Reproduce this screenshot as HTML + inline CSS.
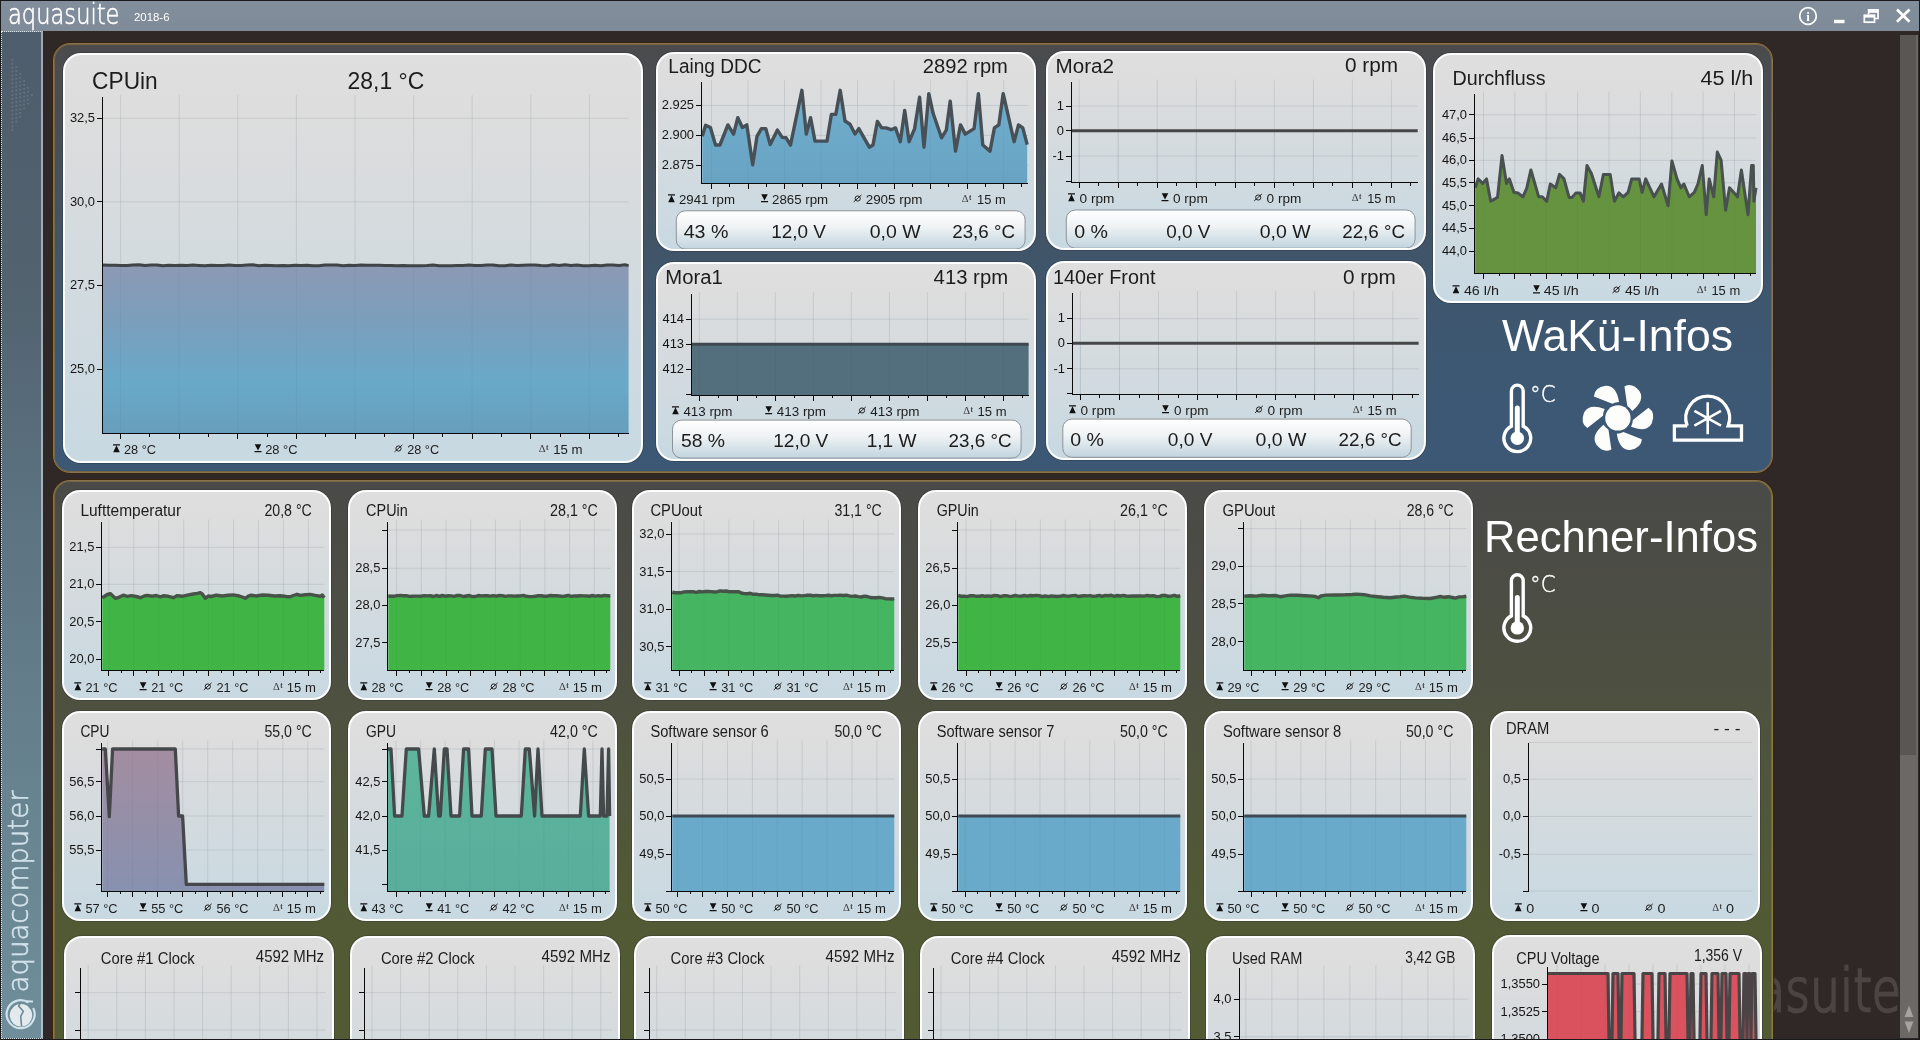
<!DOCTYPE html>
<html lang="de">
<head>
<meta charset="utf-8">
<title>aquasuite 2018-6</title>
<style>
*{box-sizing:border-box;margin:0;padding:0}
html,body{width:1920px;height:1040px;overflow:hidden;background:#302826;font-family:"Liberation Sans",sans-serif}
#win{position:absolute;left:0;top:0;width:1920px;height:1040px;overflow:hidden;background:#302826}
#titlebar{position:absolute;left:0;top:0;width:1920px;height:31px;background:linear-gradient(#828e9b,#7f8b98)}
#sidebar{position:absolute;left:1px;top:31px;width:42px;height:1008px;background:linear-gradient(#4e5d6b 0%,#52626f 25%,#5d7482 50%,#67838f 75%,#6f8d9a 100%);border:1px dotted rgba(235,240,245,.85);border-right:2px solid rgba(225,232,240,.55)}
#scroll{position:absolute;left:1900px;top:35px;width:18px;height:1003px;background:#6b6866}
#thumb{position:absolute;left:0;top:0;width:18px;height:720px;background:#5a5654;border-right:2px solid #6b6866}
.panel{position:absolute;left:53px;width:1720px;border:1px solid #887050;border-radius:17px;box-shadow:0 0 0 1px rgba(58,38,10,.8),inset 0 0 0 1px rgba(128,106,60,.85)}
#p1{top:43px;height:430px;background:linear-gradient(#4b4b4d 0%,#494d52 14%,#44525f 34%,#3f566c 55%,#3d5873 76%,#3c5875 100%)}
#p2{top:480px;height:600px;border-color:#887050 #8c7a3a #8c7a3a #8a7448;background:linear-gradient(#4a4a48 0%,#4c4d44 20%,#4e5140 37%,#50563a 53%,#515a34 75%,#515b32 100%)}
.card{position:absolute;box-shadow:0 0 0 1px rgba(35,40,48,.3);border:2px solid rgba(255,255,255,.97);border-radius:18px;background:linear-gradient(#dfdfdf 0%,#dddddd 14%,#d6dbde 40%,#cfdae0 70%,#c8d9e2 100%);overflow:hidden}
.card svg.cs{position:absolute;left:-2px;top:-2px;font-family:"Liberation Sans",sans-serif}
svg text{font-family:"Liberation Sans",sans-serif}
#ov{position:absolute;left:0;top:0}
#win{will-change:transform}
</style>
</head>
<body>
<div id="win">
<div id="titlebar"></div>
<div id="sidebar"></div>
<div id="scroll"><div id="thumb"></div></div>
<svg id="wm" width="1920" height="1040" viewBox="0 0 1920 1040" style="position:absolute;left:0;top:0"><text x="1901" y="1010.5" font-size="59" style="font-family:'DejaVu Sans','Liberation Sans',sans-serif;font-weight:200" text-anchor="end" textLength="234" lengthAdjust="spacingAndGlyphs" fill="#e8e0dc" stroke="#e8e0dc" stroke-width="2.4" opacity=".15">aquasuite</text></svg>
<div class="panel" id="p1"></div>
<div class="panel" id="p2"></div>
<div class="card" style="left:63px;top:53px;width:580px;height:410px">
<svg class="cs" width="580" height="410" viewBox="63 53 580 410">
<path d="M120.6 95.0V433.5 M179.2 95.0V433.5 M237.8 95.0V433.5 M296.4 95.0V433.5 M355.0 95.0V433.5 M413.6 95.0V433.5 M472.2 95.0V433.5 M530.8 95.0V433.5 M589.4 95.0V433.5 M102.5 118.3H628.6 M102.5 201.9H628.6 M102.5 285.5H628.6 M102.5 369.1H628.6" stroke="#66727e" stroke-opacity=".17" stroke-width="1" fill="none"/>
<defs><linearGradient id="gbig" gradientUnits="userSpaceOnUse" x1="0" y1="266" x2="0" y2="433"><stop offset="0" stop-color="#8c99b4"/><stop offset="0.35" stop-color="#7a9fbd"/><stop offset="0.7" stop-color="#69a9c8"/><stop offset="1" stop-color="#679ebc"/></linearGradient></defs>
<path d="M103.0 265.0 L109.0 265.3 L115.0 265.2 L121.0 265.4 L127.0 265.4 L133.0 264.9 L139.0 264.8 L145.0 265.6 L151.0 265.1 L157.0 265.0 L163.0 265.8 L169.0 265.3 L175.0 265.6 L181.0 265.3 L187.0 265.4 L193.0 265.0 L199.0 265.4 L205.0 265.7 L211.0 265.3 L217.0 265.5 L223.0 265.5 L229.0 264.9 L235.0 265.6 L241.0 265.4 L247.0 265.1 L253.0 264.8 L259.0 265.7 L265.0 265.3 L271.0 265.5 L277.0 265.7 L283.0 265.5 L289.0 265.7 L295.0 265.2 L301.0 265.6 L307.0 265.2 L313.0 265.7 L319.0 265.7 L325.0 264.9 L331.0 264.9 L337.0 265.0 L343.0 265.8 L349.0 265.2 L355.0 265.4 L361.0 265.1 L367.0 265.3 L373.0 265.2 L379.0 265.2 L385.0 265.4 L391.0 265.4 L397.0 265.7 L403.0 265.5 L409.0 265.7 L415.0 265.7 L421.0 265.8 L427.0 265.5 L433.0 265.0 L439.0 265.7 L445.0 265.8 L451.0 265.7 L457.0 265.4 L463.0 265.5 L469.0 265.0 L475.0 265.6 L481.0 265.4 L487.0 265.1 L493.0 264.9 L499.0 265.7 L505.0 265.8 L511.0 264.9 L517.0 265.6 L523.0 265.2 L529.0 265.0 L535.0 265.1 L541.0 265.6 L547.0 265.7 L553.0 264.8 L559.0 265.4 L565.0 264.8 L571.0 265.5 L577.0 265.1 L583.0 265.7 L589.0 265.8 L595.0 265.3 L601.0 265.8 L607.0 265.1 L613.0 264.9 L619.0 265.4 L625.0 264.8 L628.6 265.6 L628.6 433.5 L103.0 433.5Z" fill="url(#gbig)"/>
<clipPath id="cpbig"><path d="M103.0 265.0 L109.0 265.3 L115.0 265.2 L121.0 265.4 L127.0 265.4 L133.0 264.9 L139.0 264.8 L145.0 265.6 L151.0 265.1 L157.0 265.0 L163.0 265.8 L169.0 265.3 L175.0 265.6 L181.0 265.3 L187.0 265.4 L193.0 265.0 L199.0 265.4 L205.0 265.7 L211.0 265.3 L217.0 265.5 L223.0 265.5 L229.0 264.9 L235.0 265.6 L241.0 265.4 L247.0 265.1 L253.0 264.8 L259.0 265.7 L265.0 265.3 L271.0 265.5 L277.0 265.7 L283.0 265.5 L289.0 265.7 L295.0 265.2 L301.0 265.6 L307.0 265.2 L313.0 265.7 L319.0 265.7 L325.0 264.9 L331.0 264.9 L337.0 265.0 L343.0 265.8 L349.0 265.2 L355.0 265.4 L361.0 265.1 L367.0 265.3 L373.0 265.2 L379.0 265.2 L385.0 265.4 L391.0 265.4 L397.0 265.7 L403.0 265.5 L409.0 265.7 L415.0 265.7 L421.0 265.8 L427.0 265.5 L433.0 265.0 L439.0 265.7 L445.0 265.8 L451.0 265.7 L457.0 265.4 L463.0 265.5 L469.0 265.0 L475.0 265.6 L481.0 265.4 L487.0 265.1 L493.0 264.9 L499.0 265.7 L505.0 265.8 L511.0 264.9 L517.0 265.6 L523.0 265.2 L529.0 265.0 L535.0 265.1 L541.0 265.6 L547.0 265.7 L553.0 264.8 L559.0 265.4 L565.0 264.8 L571.0 265.5 L577.0 265.1 L583.0 265.7 L589.0 265.8 L595.0 265.3 L601.0 265.8 L607.0 265.1 L613.0 264.9 L619.0 265.4 L625.0 264.8 L628.6 265.6 L628.6 433.5 L103.0 433.5Z"/></clipPath>
<path d="M120.6 97.0V433.5 M179.2 97.0V433.5 M237.8 97.0V433.5 M296.4 97.0V433.5 M355.0 97.0V433.5 M413.6 97.0V433.5 M472.2 97.0V433.5 M530.8 97.0V433.5 M589.4 97.0V433.5" stroke="#203040" stroke-opacity=".04" stroke-width="1" fill="none" clip-path="url(#cpbig)"/>
<path d="M103.0 265.0 L109.0 265.3 L115.0 265.2 L121.0 265.4 L127.0 265.4 L133.0 264.9 L139.0 264.8 L145.0 265.6 L151.0 265.1 L157.0 265.0 L163.0 265.8 L169.0 265.3 L175.0 265.6 L181.0 265.3 L187.0 265.4 L193.0 265.0 L199.0 265.4 L205.0 265.7 L211.0 265.3 L217.0 265.5 L223.0 265.5 L229.0 264.9 L235.0 265.6 L241.0 265.4 L247.0 265.1 L253.0 264.8 L259.0 265.7 L265.0 265.3 L271.0 265.5 L277.0 265.7 L283.0 265.5 L289.0 265.7 L295.0 265.2 L301.0 265.6 L307.0 265.2 L313.0 265.7 L319.0 265.7 L325.0 264.9 L331.0 264.9 L337.0 265.0 L343.0 265.8 L349.0 265.2 L355.0 265.4 L361.0 265.1 L367.0 265.3 L373.0 265.2 L379.0 265.2 L385.0 265.4 L391.0 265.4 L397.0 265.7 L403.0 265.5 L409.0 265.7 L415.0 265.7 L421.0 265.8 L427.0 265.5 L433.0 265.0 L439.0 265.7 L445.0 265.8 L451.0 265.7 L457.0 265.4 L463.0 265.5 L469.0 265.0 L475.0 265.6 L481.0 265.4 L487.0 265.1 L493.0 264.9 L499.0 265.7 L505.0 265.8 L511.0 264.9 L517.0 265.6 L523.0 265.2 L529.0 265.0 L535.0 265.1 L541.0 265.6 L547.0 265.7 L553.0 264.8 L559.0 265.4 L565.0 264.8 L571.0 265.5 L577.0 265.1 L583.0 265.7 L589.0 265.8 L595.0 265.3 L601.0 265.8 L607.0 265.1 L613.0 264.9 L619.0 265.4 L625.0 264.8 L628.6 265.6" fill="none" stroke="#3f4447" stroke-width="3" stroke-linejoin="round" stroke-linecap="butt"/>
<path d="M102.5 97.0V434.0 M102.0 433.5H628.6 M120.6 433.5v5.5 M179.2 433.5v5.5 M237.8 433.5v5.5 M296.4 433.5v5.5 M355.0 433.5v5.5 M413.6 433.5v5.5 M472.2 433.5v5.5 M530.8 433.5v5.5 M589.4 433.5v5.5 M149.9 433.5v3.2 M208.5 433.5v3.2 M267.1 433.5v3.2 M325.7 433.5v3.2 M384.3 433.5v3.2 M442.9 433.5v3.2 M501.5 433.5v3.2 M560.1 433.5v3.2 M618.7 433.5v3.2 M97.0 118.3H102.5 M97.0 201.9H102.5 M97.0 285.5H102.5 M97.0 369.1H102.5" stroke="#0a0a0a" stroke-width="1" fill="none" shape-rendering="crispEdges"/>
<text x="95.0" y="122.1" font-size="12.9" text-anchor="end" fill="#151515">32,5</text>
<text x="95.0" y="205.7" font-size="12.9" text-anchor="end" fill="#151515">30,0</text>
<text x="95.0" y="289.3" font-size="12.9" text-anchor="end" fill="#151515">27,5</text>
<text x="95.0" y="372.9" font-size="12.9" text-anchor="end" fill="#151515">25,0</text>
<text x="92.1" y="88.7" font-size="24" textLength="65.6" lengthAdjust="spacingAndGlyphs" fill="#1c1c1c" >CPUin</text>
<text x="347.6" y="88.7" font-size="24" textLength="76.6" lengthAdjust="spacingAndGlyphs" fill="#1c1c1c" >28,1 °C</text>
<path d="M113.0 444.2h7v1.2h-7z M116.5 445.2L119.8 452.2H113.2z" fill="#111"/>
<text x="124.0" y="453.5" font-size="12.8" textLength="32.1" lengthAdjust="spacingAndGlyphs" fill="#1c1c1c" >28 °C</text>
<path d="M254.7 444.2h6.6L258.0 450.5z M254.5 451.1h7v1.2h-7z" fill="#111"/>
<text x="265.2" y="453.5" font-size="12.8" textLength="32.4" lengthAdjust="spacingAndGlyphs" fill="#1c1c1c" >28 °C</text>
<circle cx="398.5" cy="448.5" r="2.6" fill="none" stroke="#222" stroke-width="1"/><path d="M394.5 451.9L402.3 444.9" stroke="#222" stroke-width="1" fill="none"/>
<text x="407.2" y="453.5" font-size="12.8" textLength="31.9" lengthAdjust="spacingAndGlyphs" fill="#1c1c1c" >28 °C</text>
<text x="538.8" y="452.3" font-size="10.6" style="font-family:'Liberation Serif',serif" fill="#3c3c3c">Δ</text><text x="545.9" y="450.2" font-size="7.2" style="font-family:'Liberation Serif',serif;font-weight:bold" fill="#3c3c3c">t</text>
<text x="553.2" y="453.5" font-size="12.8" textLength="29.4" lengthAdjust="spacingAndGlyphs" fill="#1c1c1c" >15 m</text>
</svg></div>
<div class="card" style="left:656px;top:52px;width:380px;height:199px">
<svg class="cs" width="380" height="199" viewBox="656 52 380 199">
<path d="M711.5 80.0V183.5 M748.0 80.0V183.5 M784.5 80.0V183.5 M821.0 80.0V183.5 M857.5 80.0V183.5 M894.1 80.0V183.5 M930.6 80.0V183.5 M967.1 80.0V183.5 M1003.6 80.0V183.5 M701.5 105.5H1028.3 M701.5 135.4H1028.3 M701.5 165.4H1028.3" stroke="#66727e" stroke-opacity=".17" stroke-width="1" fill="none"/>
<defs><linearGradient id="glaing" gradientUnits="userSpaceOnUse" x1="0" y1="90" x2="0" y2="184"><stop offset="0" stop-color="#71aecd"/><stop offset="1" stop-color="#68a3c3"/></linearGradient></defs>
<path d="M702.3 136.3 L705.6 125.3 L710.4 127.5 L715.5 145.0 L719.9 145.0 L727.9 124.9 L733.6 134.1 L737.8 117.7 L742.4 127.5 L746.8 124.9 L752.7 164.7 L757.0 136.3 L761.4 128.6 L765.8 128.6 L770.2 144.6 L777.4 130.1 L782.2 137.4 L786.1 137.8 L790.5 145.0 L801.9 90.3 L806.3 134.1 L810.6 117.7 L815.0 141.1 L827.0 141.1 L831.4 114.4 L835.8 114.4 L840.2 90.3 L845.0 121.0 L850.0 124.2 L855.0 134.1 L858.8 128.6 L869.3 147.2 L873.0 145.0 L877.4 121.4 L881.7 127.9 L886.1 127.9 L891.1 129.7 L895.5 127.9 L900.3 141.7 L904.7 110.4 L909.1 141.7 L914.6 128.6 L919.6 97.3 L924.0 147.2 L928.8 93.6 L933.1 113.3 L941.5 137.8 L946.3 130.1 L950.2 101.3 L955.5 151.1 L960.5 124.9 L965.3 134.1 L974.1 128.6 L978.4 93.6 L982.8 145.0 L990.0 151.1 L994.4 127.9 L998.8 124.9 L1003.2 93.6 L1014.1 141.7 L1018.5 124.9 L1022.8 127.9 L1027.2 144.6 L1027.2 183.5 L702.3 183.5Z" fill="url(#glaing)"/>
<clipPath id="cplaing"><path d="M702.3 136.3 L705.6 125.3 L710.4 127.5 L715.5 145.0 L719.9 145.0 L727.9 124.9 L733.6 134.1 L737.8 117.7 L742.4 127.5 L746.8 124.9 L752.7 164.7 L757.0 136.3 L761.4 128.6 L765.8 128.6 L770.2 144.6 L777.4 130.1 L782.2 137.4 L786.1 137.8 L790.5 145.0 L801.9 90.3 L806.3 134.1 L810.6 117.7 L815.0 141.1 L827.0 141.1 L831.4 114.4 L835.8 114.4 L840.2 90.3 L845.0 121.0 L850.0 124.2 L855.0 134.1 L858.8 128.6 L869.3 147.2 L873.0 145.0 L877.4 121.4 L881.7 127.9 L886.1 127.9 L891.1 129.7 L895.5 127.9 L900.3 141.7 L904.7 110.4 L909.1 141.7 L914.6 128.6 L919.6 97.3 L924.0 147.2 L928.8 93.6 L933.1 113.3 L941.5 137.8 L946.3 130.1 L950.2 101.3 L955.5 151.1 L960.5 124.9 L965.3 134.1 L974.1 128.6 L978.4 93.6 L982.8 145.0 L990.0 151.1 L994.4 127.9 L998.8 124.9 L1003.2 93.6 L1014.1 141.7 L1018.5 124.9 L1022.8 127.9 L1027.2 144.6 L1027.2 183.5 L702.3 183.5Z"/></clipPath>
<path d="M711.5 82.0V183.5 M748.0 82.0V183.5 M784.5 82.0V183.5 M821.0 82.0V183.5 M857.5 82.0V183.5 M894.1 82.0V183.5 M930.6 82.0V183.5 M967.1 82.0V183.5 M1003.6 82.0V183.5" stroke="#203040" stroke-opacity=".04" stroke-width="1" fill="none" clip-path="url(#cplaing)"/>
<path d="M702.3 136.3 L705.6 125.3 L710.4 127.5 L715.5 145.0 L719.9 145.0 L727.9 124.9 L733.6 134.1 L737.8 117.7 L742.4 127.5 L746.8 124.9 L752.7 164.7 L757.0 136.3 L761.4 128.6 L765.8 128.6 L770.2 144.6 L777.4 130.1 L782.2 137.4 L786.1 137.8 L790.5 145.0 L801.9 90.3 L806.3 134.1 L810.6 117.7 L815.0 141.1 L827.0 141.1 L831.4 114.4 L835.8 114.4 L840.2 90.3 L845.0 121.0 L850.0 124.2 L855.0 134.1 L858.8 128.6 L869.3 147.2 L873.0 145.0 L877.4 121.4 L881.7 127.9 L886.1 127.9 L891.1 129.7 L895.5 127.9 L900.3 141.7 L904.7 110.4 L909.1 141.7 L914.6 128.6 L919.6 97.3 L924.0 147.2 L928.8 93.6 L933.1 113.3 L941.5 137.8 L946.3 130.1 L950.2 101.3 L955.5 151.1 L960.5 124.9 L965.3 134.1 L974.1 128.6 L978.4 93.6 L982.8 145.0 L990.0 151.1 L994.4 127.9 L998.8 124.9 L1003.2 93.6 L1014.1 141.7 L1018.5 124.9 L1022.8 127.9 L1027.2 144.6" fill="none" stroke="#475057" stroke-width="3.4" stroke-linejoin="round" stroke-linecap="butt"/>
<path d="M701.5 82.0V184.0 M701.0 183.5H1028.3 M711.5 183.5v5.5 M748.0 183.5v5.5 M784.5 183.5v5.5 M821.0 183.5v5.5 M857.5 183.5v5.5 M894.1 183.5v5.5 M930.6 183.5v5.5 M967.1 183.5v5.5 M1003.6 183.5v5.5 M729.8 183.5v3.2 M766.3 183.5v3.2 M802.8 183.5v3.2 M839.3 183.5v3.2 M875.8 183.5v3.2 M912.3 183.5v3.2 M948.8 183.5v3.2 M985.3 183.5v3.2 M1021.9 183.5v3.2 M696.0 105.5H701.5 M696.0 135.4H701.5 M696.0 165.4H701.5" stroke="#0a0a0a" stroke-width="1" fill="none" shape-rendering="crispEdges"/>
<text x="694.0" y="109.3" font-size="12.9" text-anchor="end" fill="#151515">2.925</text>
<text x="694.0" y="139.2" font-size="12.9" text-anchor="end" fill="#151515">2.900</text>
<text x="694.0" y="169.2" font-size="12.9" text-anchor="end" fill="#151515">2.875</text>
<text x="668.3" y="72.7" font-size="19.4" textLength="93.1" lengthAdjust="spacingAndGlyphs" fill="#1c1c1c" >Laing DDC</text>
<text x="922.8" y="72.5" font-size="19.4" textLength="85.1" lengthAdjust="spacingAndGlyphs" fill="#1c1c1c" >2892 rpm</text>
<path d="M668.0 194.2h7v1.2h-7z M671.5 195.2L674.8 202.2H668.2z" fill="#111"/>
<text x="679.0" y="203.5" font-size="12.8" textLength="55.9" lengthAdjust="spacingAndGlyphs" fill="#1c1c1c" >2941 rpm</text>
<path d="M761.2 194.2h6.6L764.5 200.5z M761.0 201.1h7v1.2h-7z" fill="#111"/>
<text x="772.0" y="203.5" font-size="12.8" textLength="56.1" lengthAdjust="spacingAndGlyphs" fill="#1c1c1c" >2865 rpm</text>
<circle cx="857.7" cy="198.5" r="2.6" fill="none" stroke="#222" stroke-width="1"/><path d="M853.7 201.9L861.5 194.9" stroke="#222" stroke-width="1" fill="none"/>
<text x="865.7" y="203.5" font-size="12.8" textLength="56.7" lengthAdjust="spacingAndGlyphs" fill="#1c1c1c" >2905 rpm</text>
<text x="961.8" y="202.3" font-size="10.6" style="font-family:'Liberation Serif',serif" fill="#3c3c3c">Δ</text><text x="968.9" y="200.2" font-size="7.2" style="font-family:'Liberation Serif',serif;font-weight:bold" fill="#3c3c3c">t</text>
<text x="977.0" y="203.5" font-size="12.8" textLength="28.6" lengthAdjust="spacingAndGlyphs" fill="#1c1c1c" >15 m</text>
<defs><linearGradient id="vblaing" x1="0" y1="0" x2="0" y2="1"><stop offset="0" stop-color="#ffffff"/><stop offset=".42" stop-color="#eff3f5"/><stop offset="1" stop-color="#c1d4de"/></linearGradient></defs>
<rect x="676.3" y="210.8" width="348.8" height="38.3" rx="9" fill="url(#vblaing)" stroke="#8c9398" stroke-width="1"/>
<text x="683.7" y="238.0" font-size="19" textLength="44.8" lengthAdjust="spacingAndGlyphs" fill="#1c1c1c" >43 %</text>
<text x="771.3" y="238.0" font-size="19" textLength="54.7" lengthAdjust="spacingAndGlyphs" fill="#1c1c1c" >12,0 V</text>
<text x="869.7" y="238.0" font-size="19" textLength="50.9" lengthAdjust="spacingAndGlyphs" fill="#1c1c1c" >0,0 W</text>
<text x="952.2" y="238.0" font-size="19" textLength="62.8" lengthAdjust="spacingAndGlyphs" fill="#1c1c1c" >23,6 °C</text>
</svg></div>
<div class="card" style="left:656px;top:262px;width:380px;height:199px">
<svg class="cs" width="380" height="199" viewBox="656 262 380 199">
<path d="M699.3 292.0V395.0 M737.3 292.0V395.0 M775.3 292.0V395.0 M813.3 292.0V395.0 M851.3 292.0V395.0 M889.4 292.0V395.0 M927.4 292.0V395.0 M965.4 292.0V395.0 M1003.4 292.0V395.0 M691.5 319.2H1028.6 M691.5 344.2H1028.6 M691.5 369.4H1028.6" stroke="#66727e" stroke-opacity=".17" stroke-width="1" fill="none"/>
<path d="M692.0 344.3 L1028.6 344.3 L1028.6 395.0 L692.0 395.0Z" fill="#536f7d"/>
<clipPath id="cpmora1"><path d="M692.0 344.3 L1028.6 344.3 L1028.6 395.0 L692.0 395.0Z"/></clipPath>
<path d="M699.3 294.0V395.0 M737.3 294.0V395.0 M775.3 294.0V395.0 M813.3 294.0V395.0 M851.3 294.0V395.0 M889.4 294.0V395.0 M927.4 294.0V395.0 M965.4 294.0V395.0 M1003.4 294.0V395.0" stroke="#203040" stroke-opacity=".04" stroke-width="1" fill="none" clip-path="url(#cpmora1)"/>
<path d="M692.0 344.3 L1028.6 344.3" fill="none" stroke="#3d484f" stroke-width="3" stroke-linejoin="round" stroke-linecap="butt"/>
<path d="M691.5 294.0V395.5 M691.0 395.0H1028.6 M699.3 395.0v5.5 M737.3 395.0v5.5 M775.3 395.0v5.5 M813.3 395.0v5.5 M851.3 395.0v5.5 M889.4 395.0v5.5 M927.4 395.0v5.5 M965.4 395.0v5.5 M1003.4 395.0v5.5 M718.3 395.0v3.2 M756.3 395.0v3.2 M794.3 395.0v3.2 M832.3 395.0v3.2 M870.4 395.0v3.2 M908.4 395.0v3.2 M946.4 395.0v3.2 M984.4 395.0v3.2 M1022.4 395.0v3.2 M686.0 319.2H691.5 M686.0 344.2H691.5 M686.0 369.4H691.5 M686.0 394.7H691.5" stroke="#0a0a0a" stroke-width="1" fill="none" shape-rendering="crispEdges"/>
<text x="684.0" y="323.0" font-size="12.9" text-anchor="end" fill="#151515">414</text>
<text x="684.0" y="348.0" font-size="12.9" text-anchor="end" fill="#151515">413</text>
<text x="684.0" y="373.2" font-size="12.9" text-anchor="end" fill="#151515">412</text>
<text x="665.3" y="283.8" font-size="19.4" textLength="57.4" lengthAdjust="spacingAndGlyphs" fill="#1c1c1c" >Mora1</text>
<text x="933.6" y="283.8" font-size="19.4" textLength="74.5" lengthAdjust="spacingAndGlyphs" fill="#1c1c1c" >413 rpm</text>
<path d="M672.0 406.2h7v1.2h-7z M675.5 407.2L678.8 414.2H672.2z" fill="#111"/>
<text x="683.4" y="415.5" font-size="12.8" textLength="49.0" lengthAdjust="spacingAndGlyphs" fill="#1c1c1c" >413 rpm</text>
<path d="M765.4 406.2h6.6L768.7 412.5z M765.2 413.1h7v1.2h-7z" fill="#111"/>
<text x="776.8" y="415.5" font-size="12.8" textLength="49.2" lengthAdjust="spacingAndGlyphs" fill="#1c1c1c" >413 rpm</text>
<circle cx="862.0" cy="410.5" r="2.6" fill="none" stroke="#222" stroke-width="1"/><path d="M858.0 413.9L865.8 406.9" stroke="#222" stroke-width="1" fill="none"/>
<text x="870.2" y="415.5" font-size="12.8" textLength="49.4" lengthAdjust="spacingAndGlyphs" fill="#1c1c1c" >413 rpm</text>
<text x="963.3" y="414.3" font-size="10.6" style="font-family:'Liberation Serif',serif" fill="#3c3c3c">Δ</text><text x="970.4" y="412.2" font-size="7.2" style="font-family:'Liberation Serif',serif;font-weight:bold" fill="#3c3c3c">t</text>
<text x="977.6" y="415.5" font-size="12.8" textLength="29.0" lengthAdjust="spacingAndGlyphs" fill="#1c1c1c" >15 m</text>
<defs><linearGradient id="vbmora1" x1="0" y1="0" x2="0" y2="1"><stop offset="0" stop-color="#ffffff"/><stop offset=".42" stop-color="#eff3f5"/><stop offset="1" stop-color="#c1d4de"/></linearGradient></defs>
<rect x="672.5" y="420.1" width="348.6" height="38.0" rx="9" fill="url(#vbmora1)" stroke="#8c9398" stroke-width="1"/>
<text x="680.9" y="446.6" font-size="19" textLength="44.1" lengthAdjust="spacingAndGlyphs" fill="#1c1c1c" >58 %</text>
<text x="773.2" y="446.6" font-size="19" textLength="55.1" lengthAdjust="spacingAndGlyphs" fill="#1c1c1c" >12,0 V</text>
<text x="866.7" y="446.6" font-size="19" textLength="49.7" lengthAdjust="spacingAndGlyphs" fill="#1c1c1c" >1,1 W</text>
<text x="948.6" y="446.6" font-size="19" textLength="62.9" lengthAdjust="spacingAndGlyphs" fill="#1c1c1c" >23,6 °C</text>
</svg></div>
<div class="card" style="left:1046px;top:51px;width:380px;height:199px">
<svg class="cs" width="380" height="199" viewBox="1046 51 380 199">
<path d="M1079.2 79.5V182.5 M1118.2 79.5V182.5 M1157.2 79.5V182.5 M1196.3 79.5V182.5 M1235.3 79.5V182.5 M1274.3 79.5V182.5 M1313.4 79.5V182.5 M1352.4 79.5V182.5 M1391.4 79.5V182.5 M1071.5 106.1H1417.7 M1071.5 130.8H1417.7 M1071.5 156.0H1417.7" stroke="#66727e" stroke-opacity=".17" stroke-width="1" fill="none"/>
<clipPath id="cpmora2"><path d="M1072.0 130.8 L1417.7 130.8 L1417.7 182.5 L1072.0 182.5Z"/></clipPath>
<path d="M1079.2 81.5V182.5 M1118.2 81.5V182.5 M1157.2 81.5V182.5 M1196.3 81.5V182.5 M1235.3 81.5V182.5 M1274.3 81.5V182.5 M1313.4 81.5V182.5 M1352.4 81.5V182.5 M1391.4 81.5V182.5" stroke="#203040" stroke-opacity=".04" stroke-width="1" fill="none" clip-path="url(#cpmora2)"/>
<path d="M1072.0 130.8 L1417.7 130.8" fill="none" stroke="#454648" stroke-width="3" stroke-linejoin="round" stroke-linecap="butt"/>
<path d="M1071.5 81.5V183.0 M1071.0 182.5H1417.7 M1079.2 182.5v5.5 M1118.2 182.5v5.5 M1157.2 182.5v5.5 M1196.3 182.5v5.5 M1235.3 182.5v5.5 M1274.3 182.5v5.5 M1313.4 182.5v5.5 M1352.4 182.5v5.5 M1391.4 182.5v5.5 M1098.7 182.5v3.2 M1137.7 182.5v3.2 M1176.8 182.5v3.2 M1215.8 182.5v3.2 M1254.8 182.5v3.2 M1293.8 182.5v3.2 M1332.9 182.5v3.2 M1371.9 182.5v3.2 M1410.9 182.5v3.2 M1066.0 106.1H1071.5 M1066.0 130.8H1071.5 M1066.0 156.0H1071.5 M1066.0 181.5H1071.5" stroke="#0a0a0a" stroke-width="1" fill="none" shape-rendering="crispEdges"/>
<text x="1064.0" y="109.9" font-size="12.9" text-anchor="end" fill="#151515">1</text>
<text x="1064.0" y="134.6" font-size="12.9" text-anchor="end" fill="#151515">0</text>
<text x="1064.0" y="159.8" font-size="12.9" text-anchor="end" fill="#151515">-1</text>
<text x="1055.5" y="73.3" font-size="19.4" textLength="58.5" lengthAdjust="spacingAndGlyphs" fill="#1c1c1c" >Mora2</text>
<text x="1344.9" y="72.3" font-size="19.4" textLength="53.1" lengthAdjust="spacingAndGlyphs" fill="#1c1c1c" >0 rpm</text>
<path d="M1068.0 193.2h7v1.2h-7z M1071.5 194.2L1074.8 201.2H1068.2z" fill="#111"/>
<text x="1079.5" y="202.5" font-size="12.8" textLength="34.9" lengthAdjust="spacingAndGlyphs" fill="#1c1c1c" >0 rpm</text>
<path d="M1161.7 193.2h6.6L1165.0 199.5z M1161.5 200.1h7v1.2h-7z" fill="#111"/>
<text x="1172.9" y="202.5" font-size="12.8" textLength="34.9" lengthAdjust="spacingAndGlyphs" fill="#1c1c1c" >0 rpm</text>
<circle cx="1258.2" cy="197.5" r="2.6" fill="none" stroke="#222" stroke-width="1"/><path d="M1254.2 200.9L1262.0 193.9" stroke="#222" stroke-width="1" fill="none"/>
<text x="1266.6" y="202.5" font-size="12.8" textLength="34.8" lengthAdjust="spacingAndGlyphs" fill="#1c1c1c" >0 rpm</text>
<text x="1351.8" y="201.3" font-size="10.6" style="font-family:'Liberation Serif',serif" fill="#3c3c3c">Δ</text><text x="1358.9" y="199.2" font-size="7.2" style="font-family:'Liberation Serif',serif;font-weight:bold" fill="#3c3c3c">t</text>
<text x="1367.2" y="202.5" font-size="12.8" textLength="28.3" lengthAdjust="spacingAndGlyphs" fill="#1c1c1c" >15 m</text>
<defs><linearGradient id="vbmora2" x1="0" y1="0" x2="0" y2="1"><stop offset="0" stop-color="#ffffff"/><stop offset=".42" stop-color="#eff3f5"/><stop offset="1" stop-color="#c1d4de"/></linearGradient></defs>
<rect x="1066.3" y="210.0" width="348.8" height="38.2" rx="9" fill="url(#vbmora2)" stroke="#8c9398" stroke-width="1"/>
<text x="1074.2" y="237.5" font-size="19" textLength="33.8" lengthAdjust="spacingAndGlyphs" fill="#1c1c1c" >0 %</text>
<text x="1166.3" y="237.5" font-size="19" textLength="44.1" lengthAdjust="spacingAndGlyphs" fill="#1c1c1c" >0,0 V</text>
<text x="1259.7" y="237.5" font-size="19" textLength="50.9" lengthAdjust="spacingAndGlyphs" fill="#1c1c1c" >0,0 W</text>
<text x="1342.2" y="237.5" font-size="19" textLength="62.9" lengthAdjust="spacingAndGlyphs" fill="#1c1c1c" >22,6 °C</text>
</svg></div>
<div class="card" style="left:1046px;top:261px;width:380px;height:199px">
<svg class="cs" width="380" height="199" viewBox="1046 261 380 199">
<path d="M1080.4 291.0V394.5 M1119.5 291.0V394.5 M1158.5 291.0V394.5 M1197.5 291.0V394.5 M1236.6 291.0V394.5 M1275.7 291.0V394.5 M1314.7 291.0V394.5 M1353.8 291.0V394.5 M1392.8 291.0V394.5 M1072.5 318.6H1418.6 M1072.5 343.3H1418.6 M1072.5 368.8H1418.6" stroke="#66727e" stroke-opacity=".17" stroke-width="1" fill="none"/>
<clipPath id="cpf140"><path d="M1073.0 343.3 L1418.6 343.3 L1418.6 394.5 L1073.0 394.5Z"/></clipPath>
<path d="M1080.4 293.0V394.5 M1119.5 293.0V394.5 M1158.5 293.0V394.5 M1197.5 293.0V394.5 M1236.6 293.0V394.5 M1275.7 293.0V394.5 M1314.7 293.0V394.5 M1353.8 293.0V394.5 M1392.8 293.0V394.5" stroke="#203040" stroke-opacity=".04" stroke-width="1" fill="none" clip-path="url(#cpf140)"/>
<path d="M1073.0 343.3 L1418.6 343.3" fill="none" stroke="#454648" stroke-width="3" stroke-linejoin="round" stroke-linecap="butt"/>
<path d="M1072.5 293.0V395.0 M1072.0 394.5H1418.6 M1080.4 394.5v5.5 M1119.5 394.5v5.5 M1158.5 394.5v5.5 M1197.5 394.5v5.5 M1236.6 394.5v5.5 M1275.7 394.5v5.5 M1314.7 394.5v5.5 M1353.8 394.5v5.5 M1392.8 394.5v5.5 M1099.9 394.5v3.2 M1139.0 394.5v3.2 M1178.0 394.5v3.2 M1217.1 394.5v3.2 M1256.1 394.5v3.2 M1295.2 394.5v3.2 M1334.2 394.5v3.2 M1373.3 394.5v3.2 M1412.3 394.5v3.2 M1067.0 318.6H1072.5 M1067.0 343.3H1072.5 M1067.0 368.8H1072.5 M1067.0 393.5H1072.5" stroke="#0a0a0a" stroke-width="1" fill="none" shape-rendering="crispEdges"/>
<text x="1065.0" y="322.4" font-size="12.9" text-anchor="end" fill="#151515">1</text>
<text x="1065.0" y="347.1" font-size="12.9" text-anchor="end" fill="#151515">0</text>
<text x="1065.0" y="372.6" font-size="12.9" text-anchor="end" fill="#151515">-1</text>
<text x="1053.1" y="284.3" font-size="19.4" textLength="102.3" lengthAdjust="spacingAndGlyphs" fill="#1c1c1c" >140er Front</text>
<text x="1342.9" y="284.3" font-size="19.4" textLength="53.0" lengthAdjust="spacingAndGlyphs" fill="#1c1c1c" >0 rpm</text>
<path d="M1069.0 405.2h7v1.2h-7z M1072.5 406.2L1075.8 413.2H1069.2z" fill="#111"/>
<text x="1080.5" y="414.5" font-size="12.8" textLength="34.8" lengthAdjust="spacingAndGlyphs" fill="#1c1c1c" >0 rpm</text>
<path d="M1162.2 405.2h6.6L1165.5 411.5z M1162.0 412.1h7v1.2h-7z" fill="#111"/>
<text x="1174.1" y="414.5" font-size="12.8" textLength="34.5" lengthAdjust="spacingAndGlyphs" fill="#1c1c1c" >0 rpm</text>
<circle cx="1259.0" cy="409.5" r="2.6" fill="none" stroke="#222" stroke-width="1"/><path d="M1255.0 412.9L1262.8 405.9" stroke="#222" stroke-width="1" fill="none"/>
<text x="1267.6" y="414.5" font-size="12.8" textLength="35.0" lengthAdjust="spacingAndGlyphs" fill="#1c1c1c" >0 rpm</text>
<text x="1352.8" y="413.3" font-size="10.6" style="font-family:'Liberation Serif',serif" fill="#3c3c3c">Δ</text><text x="1359.9" y="411.2" font-size="7.2" style="font-family:'Liberation Serif',serif;font-weight:bold" fill="#3c3c3c">t</text>
<text x="1367.6" y="414.5" font-size="12.8" textLength="29.0" lengthAdjust="spacingAndGlyphs" fill="#1c1c1c" >15 m</text>
<defs><linearGradient id="vbf140" x1="0" y1="0" x2="0" y2="1"><stop offset="0" stop-color="#ffffff"/><stop offset=".42" stop-color="#eff3f5"/><stop offset="1" stop-color="#c1d4de"/></linearGradient></defs>
<rect x="1062.8" y="419.1" width="348.4" height="38.2" rx="9" fill="url(#vbf140)" stroke="#8c9398" stroke-width="1"/>
<text x="1070.3" y="446.0" font-size="19" textLength="33.7" lengthAdjust="spacingAndGlyphs" fill="#1c1c1c" >0 %</text>
<text x="1167.8" y="446.0" font-size="19" textLength="44.6" lengthAdjust="spacingAndGlyphs" fill="#1c1c1c" >0,0 V</text>
<text x="1255.6" y="446.0" font-size="19" textLength="50.8" lengthAdjust="spacingAndGlyphs" fill="#1c1c1c" >0,0 W</text>
<text x="1338.6" y="446.0" font-size="19" textLength="62.9" lengthAdjust="spacingAndGlyphs" fill="#1c1c1c" >22,6 °C</text>
</svg></div>
<div class="card" style="left:1433px;top:53px;width:330px;height:250px">
<svg class="cs" width="330" height="250" viewBox="1433 53 330 250">
<path d="M1483.5 91.5V273.0 M1514.9 91.5V273.0 M1546.2 91.5V273.0 M1577.6 91.5V273.0 M1609.0 91.5V273.0 M1640.4 91.5V273.0 M1671.8 91.5V273.0 M1703.1 91.5V273.0 M1734.5 91.5V273.0 M1474.5 114.8H1756.0 M1474.5 138.0H1756.0 M1474.5 160.4H1756.0 M1474.5 182.8H1756.0 M1474.5 205.7H1756.0 M1474.5 228.1H1756.0 M1474.5 251.0H1756.0" stroke="#66727e" stroke-opacity=".17" stroke-width="1" fill="none"/>
<path d="M1475.2 187.8 L1478.1 178.9 L1482.6 183.4 L1486.5 178.9 L1490.7 201.3 L1497.5 197.4 L1502.0 155.6 L1506.5 183.4 L1509.4 178.9 L1513.9 192.3 L1517.8 192.9 L1522.9 196.8 L1526.7 188.4 L1530.9 169.9 L1538.7 196.8 L1542.2 196.8 L1546.7 201.3 L1550.3 184.0 L1555.7 187.8 L1559.5 174.4 L1564.0 178.9 L1569.1 197.4 L1572.1 197.4 L1575.9 192.9 L1580.1 192.9 L1583.4 201.3 L1587.0 165.5 L1591.4 173.5 L1598.9 196.8 L1603.4 174.4 L1610.2 174.4 L1614.4 201.3 L1618.9 192.9 L1623.3 196.8 L1628.1 192.3 L1631.7 178.9 L1639.1 178.9 L1642.1 192.3 L1645.7 178.9 L1654.0 196.8 L1661.5 184.0 L1668.1 205.7 L1671.9 161.0 L1677.0 178.9 L1680.9 187.8 L1683.9 184.0 L1689.2 196.8 L1694.3 192.3 L1697.9 184.0 L1702.3 165.5 L1706.2 214.7 L1709.2 178.9 L1713.7 196.8 L1717.3 152.1 L1721.1 160.1 L1725.6 210.2 L1729.5 187.8 L1737.5 196.8 L1741.4 169.9 L1748.0 214.7 L1751.6 165.5 L1753.3 165.5 L1753.9 201.3 L1756.0 187.8 L1756.0 273.0 L1475.2 273.0Z" fill="#66933f"/>
<clipPath id="cpdurch"><path d="M1475.2 187.8 L1478.1 178.9 L1482.6 183.4 L1486.5 178.9 L1490.7 201.3 L1497.5 197.4 L1502.0 155.6 L1506.5 183.4 L1509.4 178.9 L1513.9 192.3 L1517.8 192.9 L1522.9 196.8 L1526.7 188.4 L1530.9 169.9 L1538.7 196.8 L1542.2 196.8 L1546.7 201.3 L1550.3 184.0 L1555.7 187.8 L1559.5 174.4 L1564.0 178.9 L1569.1 197.4 L1572.1 197.4 L1575.9 192.9 L1580.1 192.9 L1583.4 201.3 L1587.0 165.5 L1591.4 173.5 L1598.9 196.8 L1603.4 174.4 L1610.2 174.4 L1614.4 201.3 L1618.9 192.9 L1623.3 196.8 L1628.1 192.3 L1631.7 178.9 L1639.1 178.9 L1642.1 192.3 L1645.7 178.9 L1654.0 196.8 L1661.5 184.0 L1668.1 205.7 L1671.9 161.0 L1677.0 178.9 L1680.9 187.8 L1683.9 184.0 L1689.2 196.8 L1694.3 192.3 L1697.9 184.0 L1702.3 165.5 L1706.2 214.7 L1709.2 178.9 L1713.7 196.8 L1717.3 152.1 L1721.1 160.1 L1725.6 210.2 L1729.5 187.8 L1737.5 196.8 L1741.4 169.9 L1748.0 214.7 L1751.6 165.5 L1753.3 165.5 L1753.9 201.3 L1756.0 187.8 L1756.0 273.0 L1475.2 273.0Z"/></clipPath>
<path d="M1483.5 93.5V273.0 M1514.9 93.5V273.0 M1546.2 93.5V273.0 M1577.6 93.5V273.0 M1609.0 93.5V273.0 M1640.4 93.5V273.0 M1671.8 93.5V273.0 M1703.1 93.5V273.0 M1734.5 93.5V273.0" stroke="#203040" stroke-opacity=".04" stroke-width="1" fill="none" clip-path="url(#cpdurch)"/>
<path d="M1475.2 187.8 L1478.1 178.9 L1482.6 183.4 L1486.5 178.9 L1490.7 201.3 L1497.5 197.4 L1502.0 155.6 L1506.5 183.4 L1509.4 178.9 L1513.9 192.3 L1517.8 192.9 L1522.9 196.8 L1526.7 188.4 L1530.9 169.9 L1538.7 196.8 L1542.2 196.8 L1546.7 201.3 L1550.3 184.0 L1555.7 187.8 L1559.5 174.4 L1564.0 178.9 L1569.1 197.4 L1572.1 197.4 L1575.9 192.9 L1580.1 192.9 L1583.4 201.3 L1587.0 165.5 L1591.4 173.5 L1598.9 196.8 L1603.4 174.4 L1610.2 174.4 L1614.4 201.3 L1618.9 192.9 L1623.3 196.8 L1628.1 192.3 L1631.7 178.9 L1639.1 178.9 L1642.1 192.3 L1645.7 178.9 L1654.0 196.8 L1661.5 184.0 L1668.1 205.7 L1671.9 161.0 L1677.0 178.9 L1680.9 187.8 L1683.9 184.0 L1689.2 196.8 L1694.3 192.3 L1697.9 184.0 L1702.3 165.5 L1706.2 214.7 L1709.2 178.9 L1713.7 196.8 L1717.3 152.1 L1721.1 160.1 L1725.6 210.2 L1729.5 187.8 L1737.5 196.8 L1741.4 169.9 L1748.0 214.7 L1751.6 165.5 L1753.3 165.5 L1753.9 201.3 L1756.0 187.8" fill="none" stroke="#495050" stroke-width="3" stroke-linejoin="round" stroke-linecap="butt"/>
<path d="M1474.5 93.5V273.5 M1474.0 273.0H1756.0 M1483.5 273.0v5.5 M1514.9 273.0v5.5 M1546.2 273.0v5.5 M1577.6 273.0v5.5 M1609.0 273.0v5.5 M1640.4 273.0v5.5 M1671.8 273.0v5.5 M1703.1 273.0v5.5 M1734.5 273.0v5.5 M1499.2 273.0v3.2 M1530.6 273.0v3.2 M1561.9 273.0v3.2 M1593.3 273.0v3.2 M1624.7 273.0v3.2 M1656.1 273.0v3.2 M1687.4 273.0v3.2 M1718.8 273.0v3.2 M1750.2 273.0v3.2 M1469.0 114.8H1474.5 M1469.0 138.0H1474.5 M1469.0 160.4H1474.5 M1469.0 182.8H1474.5 M1469.0 205.7H1474.5 M1469.0 228.1H1474.5 M1469.0 251.0H1474.5" stroke="#0a0a0a" stroke-width="1" fill="none" shape-rendering="crispEdges"/>
<text x="1467.0" y="118.6" font-size="12.9" text-anchor="end" fill="#151515">47,0</text>
<text x="1467.0" y="141.8" font-size="12.9" text-anchor="end" fill="#151515">46,5</text>
<text x="1467.0" y="164.2" font-size="12.9" text-anchor="end" fill="#151515">46,0</text>
<text x="1467.0" y="186.6" font-size="12.9" text-anchor="end" fill="#151515">45,5</text>
<text x="1467.0" y="209.5" font-size="12.9" text-anchor="end" fill="#151515">45,0</text>
<text x="1467.0" y="231.9" font-size="12.9" text-anchor="end" fill="#151515">44,5</text>
<text x="1467.0" y="254.8" font-size="12.9" text-anchor="end" fill="#151515">44,0</text>
<text x="1452.5" y="84.9" font-size="19.4" textLength="93.0" lengthAdjust="spacingAndGlyphs" fill="#1c1c1c" >Durchfluss</text>
<text x="1700.6" y="84.9" font-size="19.4" textLength="52.7" lengthAdjust="spacingAndGlyphs" fill="#1c1c1c" >45 l/h</text>
<path d="M1452.5 285.3h7v1.2h-7z M1456.0 286.3L1459.3 293.3H1452.7z" fill="#111"/>
<text x="1463.9" y="294.6" font-size="12.8" textLength="35.1" lengthAdjust="spacingAndGlyphs" fill="#1c1c1c" >46 l/h</text>
<path d="M1533.2 285.3h6.6L1536.5 291.6z M1533.0 292.2h7v1.2h-7z" fill="#111"/>
<text x="1543.8" y="294.6" font-size="12.8" textLength="34.8" lengthAdjust="spacingAndGlyphs" fill="#1c1c1c" >45 l/h</text>
<circle cx="1616.5" cy="289.6" r="2.6" fill="none" stroke="#222" stroke-width="1"/><path d="M1612.5 293.0L1620.3 286.0" stroke="#222" stroke-width="1" fill="none"/>
<text x="1624.9" y="294.6" font-size="12.8" textLength="34.2" lengthAdjust="spacingAndGlyphs" fill="#1c1c1c" >45 l/h</text>
<text x="1696.8" y="293.4" font-size="10.6" style="font-family:'Liberation Serif',serif" fill="#3c3c3c">Δ</text><text x="1703.9" y="291.3" font-size="7.2" style="font-family:'Liberation Serif',serif;font-weight:bold" fill="#3c3c3c">t</text>
<text x="1711.4" y="294.6" font-size="12.8" textLength="28.8" lengthAdjust="spacingAndGlyphs" fill="#1c1c1c" >15 m</text>
</svg></div>
<div class="card" style="left:61.7px;top:490px;width:269.5px;height:209.5px">
<svg class="cs" width="269.5" height="209.5" viewBox="61.7 490 269.5 209.5">
<path d="M108.6 519.5V670.0 M133.5 519.5V670.0 M158.4 519.5V670.0 M183.4 519.5V670.0 M208.3 519.5V670.0 M233.2 519.5V670.0 M258.1 519.5V670.0 M283.1 519.5V670.0 M308.0 519.5V670.0 M101.5 547.3H324.0 M101.5 584.3H324.0 M101.5 621.7H324.0 M101.5 659.0H324.0" stroke="#66727e" stroke-opacity=".17" stroke-width="1" fill="none"/>
<path d="M102.0 597.7 L104.0 596.5 L107.0 594.5 L110.0 593.6 L112.0 595.5 L115.0 598.3 L118.0 597.5 L123.0 595.2 L127.0 596.3 L131.0 595.6 L136.0 596.5 L140.0 597.7 L144.0 596.0 L147.0 595.4 L152.0 596.2 L156.0 595.5 L160.0 596.8 L163.0 595.8 L168.0 596.3 L173.0 597.7 L177.0 595.6 L182.0 596.3 L187.0 595.2 L193.0 594.0 L197.0 593.3 L200.0 592.7 L202.0 594.0 L205.0 598.3 L208.0 596.0 L211.0 596.5 L216.0 595.2 L222.0 596.0 L228.0 595.3 L233.0 594.9 L239.0 596.0 L242.0 597.0 L245.0 598.3 L248.0 596.2 L251.0 595.2 L256.0 596.0 L262.0 595.0 L268.0 595.3 L274.0 596.0 L280.0 595.8 L286.0 596.5 L290.0 596.8 L293.0 595.5 L296.7 594.3 L300.0 595.4 L305.0 594.8 L310.0 594.4 L315.0 595.4 L320.0 596.2 L322.0 595.0 L324.0 597.7 L324.0 670.0 L102.0 670.0Z" fill="#40b546"/>
<clipPath id="cpluft"><path d="M102.0 597.7 L104.0 596.5 L107.0 594.5 L110.0 593.6 L112.0 595.5 L115.0 598.3 L118.0 597.5 L123.0 595.2 L127.0 596.3 L131.0 595.6 L136.0 596.5 L140.0 597.7 L144.0 596.0 L147.0 595.4 L152.0 596.2 L156.0 595.5 L160.0 596.8 L163.0 595.8 L168.0 596.3 L173.0 597.7 L177.0 595.6 L182.0 596.3 L187.0 595.2 L193.0 594.0 L197.0 593.3 L200.0 592.7 L202.0 594.0 L205.0 598.3 L208.0 596.0 L211.0 596.5 L216.0 595.2 L222.0 596.0 L228.0 595.3 L233.0 594.9 L239.0 596.0 L242.0 597.0 L245.0 598.3 L248.0 596.2 L251.0 595.2 L256.0 596.0 L262.0 595.0 L268.0 595.3 L274.0 596.0 L280.0 595.8 L286.0 596.5 L290.0 596.8 L293.0 595.5 L296.7 594.3 L300.0 595.4 L305.0 594.8 L310.0 594.4 L315.0 595.4 L320.0 596.2 L322.0 595.0 L324.0 597.7 L324.0 670.0 L102.0 670.0Z"/></clipPath>
<path d="M108.6 521.5V670.0 M133.5 521.5V670.0 M158.4 521.5V670.0 M183.4 521.5V670.0 M208.3 521.5V670.0 M233.2 521.5V670.0 M258.1 521.5V670.0 M283.1 521.5V670.0 M308.0 521.5V670.0" stroke="#203040" stroke-opacity=".04" stroke-width="1" fill="none" clip-path="url(#cpluft)"/>
<path d="M102.0 597.7 L104.0 596.5 L107.0 594.5 L110.0 593.6 L112.0 595.5 L115.0 598.3 L118.0 597.5 L123.0 595.2 L127.0 596.3 L131.0 595.6 L136.0 596.5 L140.0 597.7 L144.0 596.0 L147.0 595.4 L152.0 596.2 L156.0 595.5 L160.0 596.8 L163.0 595.8 L168.0 596.3 L173.0 597.7 L177.0 595.6 L182.0 596.3 L187.0 595.2 L193.0 594.0 L197.0 593.3 L200.0 592.7 L202.0 594.0 L205.0 598.3 L208.0 596.0 L211.0 596.5 L216.0 595.2 L222.0 596.0 L228.0 595.3 L233.0 594.9 L239.0 596.0 L242.0 597.0 L245.0 598.3 L248.0 596.2 L251.0 595.2 L256.0 596.0 L262.0 595.0 L268.0 595.3 L274.0 596.0 L280.0 595.8 L286.0 596.5 L290.0 596.8 L293.0 595.5 L296.7 594.3 L300.0 595.4 L305.0 594.8 L310.0 594.4 L315.0 595.4 L320.0 596.2 L322.0 595.0 L324.0 597.7" fill="none" stroke="#475249" stroke-width="3.4" stroke-linejoin="round" stroke-linecap="butt"/>
<path d="M101.5 521.5V670.5 M101.0 670.0H324.0 M108.6 670.0v5.5 M133.5 670.0v5.5 M158.4 670.0v5.5 M183.4 670.0v5.5 M208.3 670.0v5.5 M233.2 670.0v5.5 M258.1 670.0v5.5 M283.1 670.0v5.5 M308.0 670.0v5.5 M121.1 670.0v3.2 M146.0 670.0v3.2 M170.9 670.0v3.2 M195.8 670.0v3.2 M220.8 670.0v3.2 M245.7 670.0v3.2 M270.6 670.0v3.2 M295.5 670.0v3.2 M320.5 670.0v3.2 M96.0 547.3H101.5 M96.0 584.3H101.5 M96.0 621.7H101.5 M96.0 659.0H101.5" stroke="#0a0a0a" stroke-width="1" fill="none" shape-rendering="crispEdges"/>
<text x="94.0" y="551.1" font-size="12.9" text-anchor="end" fill="#151515">21,5</text>
<text x="94.0" y="588.1" font-size="12.9" text-anchor="end" fill="#151515">21,0</text>
<text x="94.0" y="625.5" font-size="12.9" text-anchor="end" fill="#151515">20,5</text>
<text x="94.0" y="662.8" font-size="12.9" text-anchor="end" fill="#151515">20,0</text>
<text x="80.1" y="516.0" font-size="15.6" textLength="100.7" lengthAdjust="spacingAndGlyphs" fill="#1c1c1c" >Lufttemperatur</text>
<text x="264.1" y="516.0" font-size="15.6" textLength="47.4" lengthAdjust="spacingAndGlyphs" fill="#1c1c1c" >20,8 °C</text>
<path d="M74.0 682.2h7v1.2h-7z M77.5 683.2L80.8 690.2H74.2z" fill="#111"/>
<text x="85.2" y="691.5" font-size="12.8" textLength="32.1" lengthAdjust="spacingAndGlyphs" fill="#1c1c1c" >21 °C</text>
<path d="M139.5 682.2h6.6L142.8 688.5z M139.3 689.1h7v1.2h-7z" fill="#111"/>
<text x="150.9" y="691.5" font-size="12.8" textLength="32.1" lengthAdjust="spacingAndGlyphs" fill="#1c1c1c" >21 °C</text>
<circle cx="207.5" cy="686.5" r="2.6" fill="none" stroke="#222" stroke-width="1"/><path d="M203.5 689.9L211.3 682.9" stroke="#222" stroke-width="1" fill="none"/>
<text x="216.2" y="691.5" font-size="12.8" textLength="32.1" lengthAdjust="spacingAndGlyphs" fill="#1c1c1c" >21 °C</text>
<text x="272.8" y="690.3" font-size="10.6" style="font-family:'Liberation Serif',serif" fill="#3c3c3c">Δ</text><text x="279.9" y="688.2" font-size="7.2" style="font-family:'Liberation Serif',serif;font-weight:bold" fill="#3c3c3c">t</text>
<text x="286.5" y="691.5" font-size="12.8" textLength="29.1" lengthAdjust="spacingAndGlyphs" fill="#1c1c1c" >15 m</text>
</svg></div>
<div class="card" style="left:347.7px;top:490px;width:269.50000000000006px;height:209.5px">
<svg class="cs" width="269.50000000000006" height="209.5" viewBox="347.7 490 269.50000000000006 209.5">
<path d="M396.3 519.5V670.0 M421.0 519.5V670.0 M445.7 519.5V670.0 M470.4 519.5V670.0 M495.1 519.5V670.0 M519.9 519.5V670.0 M544.6 519.5V670.0 M569.3 519.5V670.0 M594.0 519.5V670.0 M387.5 530.0H610.0 M387.5 568.3H610.0 M387.5 605.0H610.0 M387.5 642.7H610.0" stroke="#66727e" stroke-opacity=".17" stroke-width="1" fill="none"/>
<path d="M388.0 596.0 L391.0 596.2 L394.0 596.2 L397.0 595.6 L400.0 595.4 L403.0 595.8 L406.0 595.7 L409.0 596.4 L412.0 596.2 L415.0 596.1 L418.0 596.1 L421.0 596.2 L424.0 595.6 L427.0 595.9 L430.0 595.6 L433.0 596.5 L436.0 595.5 L439.0 596.4 L442.0 595.5 L445.0 596.2 L448.0 595.8 L451.0 595.9 L454.0 596.4 L457.0 595.4 L460.0 595.5 L463.0 596.5 L466.0 596.0 L469.0 595.5 L472.0 596.6 L475.0 596.5 L478.0 595.5 L481.0 595.9 L484.0 595.6 L487.0 595.8 L490.0 596.1 L493.0 595.6 L496.0 596.2 L499.0 595.5 L502.0 595.6 L505.0 596.4 L508.0 595.9 L511.0 595.9 L514.0 596.1 L517.0 596.0 L520.0 595.9 L523.0 595.4 L526.0 596.3 L529.0 596.6 L532.0 596.6 L535.0 596.2 L538.0 595.8 L541.0 595.8 L544.0 596.2 L547.0 596.2 L550.0 595.5 L553.0 595.7 L556.0 595.8 L559.0 596.0 L562.0 596.4 L565.0 596.0 L568.0 595.4 L571.0 596.4 L574.0 595.9 L577.0 596.0 L580.0 595.7 L583.0 595.9 L586.0 595.9 L589.0 596.3 L592.0 595.5 L595.0 596.1 L598.0 595.6 L601.0 596.2 L604.0 595.4 L607.0 595.7 L610.0 596.0 L610.0 670.0 L388.0 670.0Z" fill="#40b546"/>
<clipPath id="cpcpuin2"><path d="M388.0 596.0 L391.0 596.2 L394.0 596.2 L397.0 595.6 L400.0 595.4 L403.0 595.8 L406.0 595.7 L409.0 596.4 L412.0 596.2 L415.0 596.1 L418.0 596.1 L421.0 596.2 L424.0 595.6 L427.0 595.9 L430.0 595.6 L433.0 596.5 L436.0 595.5 L439.0 596.4 L442.0 595.5 L445.0 596.2 L448.0 595.8 L451.0 595.9 L454.0 596.4 L457.0 595.4 L460.0 595.5 L463.0 596.5 L466.0 596.0 L469.0 595.5 L472.0 596.6 L475.0 596.5 L478.0 595.5 L481.0 595.9 L484.0 595.6 L487.0 595.8 L490.0 596.1 L493.0 595.6 L496.0 596.2 L499.0 595.5 L502.0 595.6 L505.0 596.4 L508.0 595.9 L511.0 595.9 L514.0 596.1 L517.0 596.0 L520.0 595.9 L523.0 595.4 L526.0 596.3 L529.0 596.6 L532.0 596.6 L535.0 596.2 L538.0 595.8 L541.0 595.8 L544.0 596.2 L547.0 596.2 L550.0 595.5 L553.0 595.7 L556.0 595.8 L559.0 596.0 L562.0 596.4 L565.0 596.0 L568.0 595.4 L571.0 596.4 L574.0 595.9 L577.0 596.0 L580.0 595.7 L583.0 595.9 L586.0 595.9 L589.0 596.3 L592.0 595.5 L595.0 596.1 L598.0 595.6 L601.0 596.2 L604.0 595.4 L607.0 595.7 L610.0 596.0 L610.0 670.0 L388.0 670.0Z"/></clipPath>
<path d="M396.3 521.5V670.0 M421.0 521.5V670.0 M445.7 521.5V670.0 M470.4 521.5V670.0 M495.1 521.5V670.0 M519.9 521.5V670.0 M544.6 521.5V670.0 M569.3 521.5V670.0 M594.0 521.5V670.0" stroke="#203040" stroke-opacity=".04" stroke-width="1" fill="none" clip-path="url(#cpcpuin2)"/>
<path d="M388.0 596.0 L391.0 596.2 L394.0 596.2 L397.0 595.6 L400.0 595.4 L403.0 595.8 L406.0 595.7 L409.0 596.4 L412.0 596.2 L415.0 596.1 L418.0 596.1 L421.0 596.2 L424.0 595.6 L427.0 595.9 L430.0 595.6 L433.0 596.5 L436.0 595.5 L439.0 596.4 L442.0 595.5 L445.0 596.2 L448.0 595.8 L451.0 595.9 L454.0 596.4 L457.0 595.4 L460.0 595.5 L463.0 596.5 L466.0 596.0 L469.0 595.5 L472.0 596.6 L475.0 596.5 L478.0 595.5 L481.0 595.9 L484.0 595.6 L487.0 595.8 L490.0 596.1 L493.0 595.6 L496.0 596.2 L499.0 595.5 L502.0 595.6 L505.0 596.4 L508.0 595.9 L511.0 595.9 L514.0 596.1 L517.0 596.0 L520.0 595.9 L523.0 595.4 L526.0 596.3 L529.0 596.6 L532.0 596.6 L535.0 596.2 L538.0 595.8 L541.0 595.8 L544.0 596.2 L547.0 596.2 L550.0 595.5 L553.0 595.7 L556.0 595.8 L559.0 596.0 L562.0 596.4 L565.0 596.0 L568.0 595.4 L571.0 596.4 L574.0 595.9 L577.0 596.0 L580.0 595.7 L583.0 595.9 L586.0 595.9 L589.0 596.3 L592.0 595.5 L595.0 596.1 L598.0 595.6 L601.0 596.2 L604.0 595.4 L607.0 595.7 L610.0 596.0" fill="none" stroke="#475249" stroke-width="3.4" stroke-linejoin="round" stroke-linecap="butt"/>
<path d="M387.5 521.5V670.5 M387.0 670.0H610.0 M396.3 670.0v5.5 M421.0 670.0v5.5 M445.7 670.0v5.5 M470.4 670.0v5.5 M495.1 670.0v5.5 M519.9 670.0v5.5 M544.6 670.0v5.5 M569.3 670.0v5.5 M594.0 670.0v5.5 M408.7 670.0v3.2 M433.4 670.0v3.2 M458.1 670.0v3.2 M482.8 670.0v3.2 M507.5 670.0v3.2 M532.2 670.0v3.2 M556.9 670.0v3.2 M581.6 670.0v3.2 M606.4 670.0v3.2 M382.0 530.0H387.5 M382.0 568.3H387.5 M382.0 605.0H387.5 M382.0 642.7H387.5" stroke="#0a0a0a" stroke-width="1" fill="none" shape-rendering="crispEdges"/>
<text x="380.0" y="572.1" font-size="12.9" text-anchor="end" fill="#151515">28,5</text>
<text x="380.0" y="608.8" font-size="12.9" text-anchor="end" fill="#151515">28,0</text>
<text x="380.0" y="646.5" font-size="12.9" text-anchor="end" fill="#151515">27,5</text>
<text x="365.8" y="516.0" font-size="15.6" textLength="41.7" lengthAdjust="spacingAndGlyphs" fill="#1c1c1c" >CPUin</text>
<text x="549.8" y="516.0" font-size="15.6" textLength="47.7" lengthAdjust="spacingAndGlyphs" fill="#1c1c1c" >28,1 °C</text>
<path d="M360.0 682.2h7v1.2h-7z M363.5 683.2L366.8 690.2H360.2z" fill="#111"/>
<text x="371.2" y="691.5" font-size="12.8" textLength="32.1" lengthAdjust="spacingAndGlyphs" fill="#1c1c1c" >28 °C</text>
<path d="M425.5 682.2h6.6L428.8 688.5z M425.3 689.1h7v1.2h-7z" fill="#111"/>
<text x="436.9" y="691.5" font-size="12.8" textLength="32.1" lengthAdjust="spacingAndGlyphs" fill="#1c1c1c" >28 °C</text>
<circle cx="493.5" cy="686.5" r="2.6" fill="none" stroke="#222" stroke-width="1"/><path d="M489.5 689.9L497.3 682.9" stroke="#222" stroke-width="1" fill="none"/>
<text x="502.2" y="691.5" font-size="12.8" textLength="32.1" lengthAdjust="spacingAndGlyphs" fill="#1c1c1c" >28 °C</text>
<text x="558.8" y="690.3" font-size="10.6" style="font-family:'Liberation Serif',serif" fill="#3c3c3c">Δ</text><text x="565.9" y="688.2" font-size="7.2" style="font-family:'Liberation Serif',serif;font-weight:bold" fill="#3c3c3c">t</text>
<text x="572.5" y="691.5" font-size="12.8" textLength="29.1" lengthAdjust="spacingAndGlyphs" fill="#1c1c1c" >15 m</text>
</svg></div>
<div class="card" style="left:631.7px;top:490px;width:269.5px;height:209.5px">
<svg class="cs" width="269.5" height="209.5" viewBox="631.7 490 269.5 209.5">
<path d="M678.8 519.5V670.0 M703.7 519.5V670.0 M728.6 519.5V670.0 M753.5 519.5V670.0 M778.3 519.5V670.0 M803.2 519.5V670.0 M828.1 519.5V670.0 M853.0 519.5V670.0 M877.9 519.5V670.0 M671.5 534.0H894.0 M671.5 571.7H894.0 M671.5 609.0H894.0 M671.5 646.7H894.0" stroke="#66727e" stroke-opacity=".17" stroke-width="1" fill="none"/>
<path d="M672.0 592.2 L675.0 592.7 L678.0 592.6 L681.0 592.7 L684.0 591.9 L687.0 591.8 L690.0 591.7 L693.0 591.7 L696.0 592.3 L699.0 591.5 L702.0 591.9 L705.0 591.5 L708.0 591.5 L711.0 591.6 L714.0 592.0 L717.0 591.7 L720.0 590.9 L723.0 591.2 L726.0 591.0 L729.0 591.8 L732.0 591.7 L735.0 591.7 L738.0 591.6 L741.0 593.0 L744.0 593.6 L747.0 593.7 L750.0 593.3 L753.0 594.3 L756.0 594.2 L759.0 594.8 L762.0 594.8 L765.0 595.0 L768.0 595.2 L771.0 595.5 L774.0 595.5 L777.0 595.2 L780.0 596.1 L783.0 596.1 L786.0 596.3 L789.0 595.9 L792.0 595.8 L795.0 596.0 L798.0 595.3 L801.0 595.9 L804.0 595.6 L807.0 595.3 L810.0 595.3 L813.0 595.7 L816.0 595.4 L819.0 595.7 L822.0 595.8 L825.0 595.6 L828.0 595.3 L831.0 595.7 L834.0 595.4 L837.0 595.4 L840.0 595.3 L843.0 595.5 L846.0 595.2 L849.0 595.9 L852.0 596.4 L855.0 596.0 L858.0 596.6 L861.0 597.0 L864.0 596.2 L867.0 596.5 L870.0 597.5 L873.0 597.8 L876.0 597.8 L879.0 597.4 L882.0 597.9 L885.0 598.7 L888.0 598.9 L891.0 599.0 L894.0 598.9 L894.0 670.0 L672.0 670.0Z" fill="#46b561"/>
<clipPath id="cpcpuout"><path d="M672.0 592.2 L675.0 592.7 L678.0 592.6 L681.0 592.7 L684.0 591.9 L687.0 591.8 L690.0 591.7 L693.0 591.7 L696.0 592.3 L699.0 591.5 L702.0 591.9 L705.0 591.5 L708.0 591.5 L711.0 591.6 L714.0 592.0 L717.0 591.7 L720.0 590.9 L723.0 591.2 L726.0 591.0 L729.0 591.8 L732.0 591.7 L735.0 591.7 L738.0 591.6 L741.0 593.0 L744.0 593.6 L747.0 593.7 L750.0 593.3 L753.0 594.3 L756.0 594.2 L759.0 594.8 L762.0 594.8 L765.0 595.0 L768.0 595.2 L771.0 595.5 L774.0 595.5 L777.0 595.2 L780.0 596.1 L783.0 596.1 L786.0 596.3 L789.0 595.9 L792.0 595.8 L795.0 596.0 L798.0 595.3 L801.0 595.9 L804.0 595.6 L807.0 595.3 L810.0 595.3 L813.0 595.7 L816.0 595.4 L819.0 595.7 L822.0 595.8 L825.0 595.6 L828.0 595.3 L831.0 595.7 L834.0 595.4 L837.0 595.4 L840.0 595.3 L843.0 595.5 L846.0 595.2 L849.0 595.9 L852.0 596.4 L855.0 596.0 L858.0 596.6 L861.0 597.0 L864.0 596.2 L867.0 596.5 L870.0 597.5 L873.0 597.8 L876.0 597.8 L879.0 597.4 L882.0 597.9 L885.0 598.7 L888.0 598.9 L891.0 599.0 L894.0 598.9 L894.0 670.0 L672.0 670.0Z"/></clipPath>
<path d="M678.8 521.5V670.0 M703.7 521.5V670.0 M728.6 521.5V670.0 M753.5 521.5V670.0 M778.3 521.5V670.0 M803.2 521.5V670.0 M828.1 521.5V670.0 M853.0 521.5V670.0 M877.9 521.5V670.0" stroke="#203040" stroke-opacity=".04" stroke-width="1" fill="none" clip-path="url(#cpcpuout)"/>
<path d="M672.0 592.2 L675.0 592.7 L678.0 592.6 L681.0 592.7 L684.0 591.9 L687.0 591.8 L690.0 591.7 L693.0 591.7 L696.0 592.3 L699.0 591.5 L702.0 591.9 L705.0 591.5 L708.0 591.5 L711.0 591.6 L714.0 592.0 L717.0 591.7 L720.0 590.9 L723.0 591.2 L726.0 591.0 L729.0 591.8 L732.0 591.7 L735.0 591.7 L738.0 591.6 L741.0 593.0 L744.0 593.6 L747.0 593.7 L750.0 593.3 L753.0 594.3 L756.0 594.2 L759.0 594.8 L762.0 594.8 L765.0 595.0 L768.0 595.2 L771.0 595.5 L774.0 595.5 L777.0 595.2 L780.0 596.1 L783.0 596.1 L786.0 596.3 L789.0 595.9 L792.0 595.8 L795.0 596.0 L798.0 595.3 L801.0 595.9 L804.0 595.6 L807.0 595.3 L810.0 595.3 L813.0 595.7 L816.0 595.4 L819.0 595.7 L822.0 595.8 L825.0 595.6 L828.0 595.3 L831.0 595.7 L834.0 595.4 L837.0 595.4 L840.0 595.3 L843.0 595.5 L846.0 595.2 L849.0 595.9 L852.0 596.4 L855.0 596.0 L858.0 596.6 L861.0 597.0 L864.0 596.2 L867.0 596.5 L870.0 597.5 L873.0 597.8 L876.0 597.8 L879.0 597.4 L882.0 597.9 L885.0 598.7 L888.0 598.9 L891.0 599.0 L894.0 598.9" fill="none" stroke="#475249" stroke-width="3.4" stroke-linejoin="round" stroke-linecap="butt"/>
<path d="M671.5 521.5V670.5 M671.0 670.0H894.0 M678.8 670.0v5.5 M703.7 670.0v5.5 M728.6 670.0v5.5 M753.5 670.0v5.5 M778.3 670.0v5.5 M803.2 670.0v5.5 M828.1 670.0v5.5 M853.0 670.0v5.5 M877.9 670.0v5.5 M691.2 670.0v3.2 M716.1 670.0v3.2 M741.0 670.0v3.2 M765.9 670.0v3.2 M790.8 670.0v3.2 M815.7 670.0v3.2 M840.6 670.0v3.2 M865.5 670.0v3.2 M890.3 670.0v3.2 M666.0 534.0H671.5 M666.0 571.7H671.5 M666.0 609.0H671.5 M666.0 646.7H671.5" stroke="#0a0a0a" stroke-width="1" fill="none" shape-rendering="crispEdges"/>
<text x="664.0" y="537.8" font-size="12.9" text-anchor="end" fill="#151515">32,0</text>
<text x="664.0" y="575.5" font-size="12.9" text-anchor="end" fill="#151515">31,5</text>
<text x="664.0" y="612.8" font-size="12.9" text-anchor="end" fill="#151515">31,0</text>
<text x="664.0" y="650.5" font-size="12.9" text-anchor="end" fill="#151515">30,5</text>
<text x="650.1" y="516.0" font-size="15.6" textLength="51.7" lengthAdjust="spacingAndGlyphs" fill="#1c1c1c" >CPUout</text>
<text x="834.1" y="516.0" font-size="15.6" textLength="47.4" lengthAdjust="spacingAndGlyphs" fill="#1c1c1c" >31,1 °C</text>
<path d="M644.0 682.2h7v1.2h-7z M647.5 683.2L650.8 690.2H644.2z" fill="#111"/>
<text x="655.2" y="691.5" font-size="12.8" textLength="32.1" lengthAdjust="spacingAndGlyphs" fill="#1c1c1c" >31 °C</text>
<path d="M709.5 682.2h6.6L712.8 688.5z M709.3 689.1h7v1.2h-7z" fill="#111"/>
<text x="720.9" y="691.5" font-size="12.8" textLength="32.1" lengthAdjust="spacingAndGlyphs" fill="#1c1c1c" >31 °C</text>
<circle cx="777.5" cy="686.5" r="2.6" fill="none" stroke="#222" stroke-width="1"/><path d="M773.5 689.9L781.3 682.9" stroke="#222" stroke-width="1" fill="none"/>
<text x="786.2" y="691.5" font-size="12.8" textLength="32.1" lengthAdjust="spacingAndGlyphs" fill="#1c1c1c" >31 °C</text>
<text x="842.8" y="690.3" font-size="10.6" style="font-family:'Liberation Serif',serif" fill="#3c3c3c">Δ</text><text x="849.9" y="688.2" font-size="7.2" style="font-family:'Liberation Serif',serif;font-weight:bold" fill="#3c3c3c">t</text>
<text x="856.5" y="691.5" font-size="12.8" textLength="29.1" lengthAdjust="spacingAndGlyphs" fill="#1c1c1c" >15 m</text>
</svg></div>
<div class="card" style="left:917.7px;top:490px;width:269.5px;height:209.5px">
<svg class="cs" width="269.5" height="209.5" viewBox="917.7 490 269.5 209.5">
<path d="M965.7 519.5V670.0 M990.5 519.5V670.0 M1015.3 519.5V670.0 M1040.1 519.5V670.0 M1065.0 519.5V670.0 M1089.8 519.5V670.0 M1114.6 519.5V670.0 M1139.4 519.5V670.0 M1164.2 519.5V670.0 M957.5 530.0H1180.0 M957.5 568.3H1180.0 M957.5 605.0H1180.0 M957.5 642.7H1180.0" stroke="#66727e" stroke-opacity=".17" stroke-width="1" fill="none"/>
<path d="M958.0 595.4 L961.0 596.3 L964.0 596.2 L967.0 596.6 L970.0 595.7 L973.0 595.7 L976.0 596.3 L979.0 596.2 L982.0 595.7 L985.0 596.3 L988.0 595.9 L991.0 596.4 L994.0 595.5 L997.0 595.6 L1000.0 596.6 L1003.0 595.8 L1006.0 595.7 L1009.0 596.4 L1012.0 596.2 L1015.0 595.5 L1018.0 596.1 L1021.0 596.2 L1024.0 595.5 L1027.0 596.2 L1030.0 595.5 L1033.0 595.8 L1036.0 595.4 L1039.0 595.6 L1042.0 596.7 L1045.0 595.9 L1048.0 596.7 L1051.0 595.9 L1054.0 596.2 L1057.0 596.5 L1060.0 596.3 L1063.0 595.5 L1066.0 596.1 L1069.0 596.2 L1072.0 595.6 L1075.0 595.4 L1078.0 596.5 L1081.0 596.0 L1084.0 595.6 L1087.0 595.9 L1090.0 595.6 L1093.0 596.4 L1096.0 596.0 L1099.0 595.4 L1102.0 596.4 L1105.0 595.4 L1108.0 595.7 L1111.0 595.3 L1114.0 596.3 L1117.0 595.5 L1120.0 596.0 L1123.0 595.4 L1126.0 596.0 L1129.0 596.3 L1132.0 596.0 L1135.0 595.9 L1138.0 596.0 L1141.0 595.9 L1144.0 596.1 L1147.0 595.4 L1150.0 596.0 L1153.0 595.6 L1156.0 596.5 L1159.0 596.6 L1162.0 595.4 L1165.0 595.5 L1168.0 596.3 L1171.0 596.1 L1174.0 595.3 L1177.0 596.3 L1180.0 596.0 L1180.0 670.0 L958.0 670.0Z" fill="#40b546"/>
<clipPath id="cpgpuin"><path d="M958.0 595.4 L961.0 596.3 L964.0 596.2 L967.0 596.6 L970.0 595.7 L973.0 595.7 L976.0 596.3 L979.0 596.2 L982.0 595.7 L985.0 596.3 L988.0 595.9 L991.0 596.4 L994.0 595.5 L997.0 595.6 L1000.0 596.6 L1003.0 595.8 L1006.0 595.7 L1009.0 596.4 L1012.0 596.2 L1015.0 595.5 L1018.0 596.1 L1021.0 596.2 L1024.0 595.5 L1027.0 596.2 L1030.0 595.5 L1033.0 595.8 L1036.0 595.4 L1039.0 595.6 L1042.0 596.7 L1045.0 595.9 L1048.0 596.7 L1051.0 595.9 L1054.0 596.2 L1057.0 596.5 L1060.0 596.3 L1063.0 595.5 L1066.0 596.1 L1069.0 596.2 L1072.0 595.6 L1075.0 595.4 L1078.0 596.5 L1081.0 596.0 L1084.0 595.6 L1087.0 595.9 L1090.0 595.6 L1093.0 596.4 L1096.0 596.0 L1099.0 595.4 L1102.0 596.4 L1105.0 595.4 L1108.0 595.7 L1111.0 595.3 L1114.0 596.3 L1117.0 595.5 L1120.0 596.0 L1123.0 595.4 L1126.0 596.0 L1129.0 596.3 L1132.0 596.0 L1135.0 595.9 L1138.0 596.0 L1141.0 595.9 L1144.0 596.1 L1147.0 595.4 L1150.0 596.0 L1153.0 595.6 L1156.0 596.5 L1159.0 596.6 L1162.0 595.4 L1165.0 595.5 L1168.0 596.3 L1171.0 596.1 L1174.0 595.3 L1177.0 596.3 L1180.0 596.0 L1180.0 670.0 L958.0 670.0Z"/></clipPath>
<path d="M965.7 521.5V670.0 M990.5 521.5V670.0 M1015.3 521.5V670.0 M1040.1 521.5V670.0 M1065.0 521.5V670.0 M1089.8 521.5V670.0 M1114.6 521.5V670.0 M1139.4 521.5V670.0 M1164.2 521.5V670.0" stroke="#203040" stroke-opacity=".04" stroke-width="1" fill="none" clip-path="url(#cpgpuin)"/>
<path d="M958.0 595.4 L961.0 596.3 L964.0 596.2 L967.0 596.6 L970.0 595.7 L973.0 595.7 L976.0 596.3 L979.0 596.2 L982.0 595.7 L985.0 596.3 L988.0 595.9 L991.0 596.4 L994.0 595.5 L997.0 595.6 L1000.0 596.6 L1003.0 595.8 L1006.0 595.7 L1009.0 596.4 L1012.0 596.2 L1015.0 595.5 L1018.0 596.1 L1021.0 596.2 L1024.0 595.5 L1027.0 596.2 L1030.0 595.5 L1033.0 595.8 L1036.0 595.4 L1039.0 595.6 L1042.0 596.7 L1045.0 595.9 L1048.0 596.7 L1051.0 595.9 L1054.0 596.2 L1057.0 596.5 L1060.0 596.3 L1063.0 595.5 L1066.0 596.1 L1069.0 596.2 L1072.0 595.6 L1075.0 595.4 L1078.0 596.5 L1081.0 596.0 L1084.0 595.6 L1087.0 595.9 L1090.0 595.6 L1093.0 596.4 L1096.0 596.0 L1099.0 595.4 L1102.0 596.4 L1105.0 595.4 L1108.0 595.7 L1111.0 595.3 L1114.0 596.3 L1117.0 595.5 L1120.0 596.0 L1123.0 595.4 L1126.0 596.0 L1129.0 596.3 L1132.0 596.0 L1135.0 595.9 L1138.0 596.0 L1141.0 595.9 L1144.0 596.1 L1147.0 595.4 L1150.0 596.0 L1153.0 595.6 L1156.0 596.5 L1159.0 596.6 L1162.0 595.4 L1165.0 595.5 L1168.0 596.3 L1171.0 596.1 L1174.0 595.3 L1177.0 596.3 L1180.0 596.0" fill="none" stroke="#475249" stroke-width="3.4" stroke-linejoin="round" stroke-linecap="butt"/>
<path d="M957.5 521.5V670.5 M957.0 670.0H1180.0 M965.7 670.0v5.5 M990.5 670.0v5.5 M1015.3 670.0v5.5 M1040.1 670.0v5.5 M1065.0 670.0v5.5 M1089.8 670.0v5.5 M1114.6 670.0v5.5 M1139.4 670.0v5.5 M1164.2 670.0v5.5 M978.1 670.0v3.2 M1002.9 670.0v3.2 M1027.7 670.0v3.2 M1052.5 670.0v3.2 M1077.4 670.0v3.2 M1102.2 670.0v3.2 M1127.0 670.0v3.2 M1151.8 670.0v3.2 M1176.6 670.0v3.2 M952.0 530.0H957.5 M952.0 568.3H957.5 M952.0 605.0H957.5 M952.0 642.7H957.5" stroke="#0a0a0a" stroke-width="1" fill="none" shape-rendering="crispEdges"/>
<text x="950.0" y="572.1" font-size="12.9" text-anchor="end" fill="#151515">26,5</text>
<text x="950.0" y="608.8" font-size="12.9" text-anchor="end" fill="#151515">26,0</text>
<text x="950.0" y="646.5" font-size="12.9" text-anchor="end" fill="#151515">25,5</text>
<text x="936.4" y="516.0" font-size="15.6" textLength="42.1" lengthAdjust="spacingAndGlyphs" fill="#1c1c1c" >GPUin</text>
<text x="1119.8" y="516.0" font-size="15.6" textLength="47.7" lengthAdjust="spacingAndGlyphs" fill="#1c1c1c" >26,1 °C</text>
<path d="M930.0 682.2h7v1.2h-7z M933.5 683.2L936.8 690.2H930.2z" fill="#111"/>
<text x="941.2" y="691.5" font-size="12.8" textLength="32.1" lengthAdjust="spacingAndGlyphs" fill="#1c1c1c" >26 °C</text>
<path d="M995.5 682.2h6.6L998.8 688.5z M995.3 689.1h7v1.2h-7z" fill="#111"/>
<text x="1006.9" y="691.5" font-size="12.8" textLength="32.1" lengthAdjust="spacingAndGlyphs" fill="#1c1c1c" >26 °C</text>
<circle cx="1063.5" cy="686.5" r="2.6" fill="none" stroke="#222" stroke-width="1"/><path d="M1059.5 689.9L1067.3 682.9" stroke="#222" stroke-width="1" fill="none"/>
<text x="1072.2" y="691.5" font-size="12.8" textLength="32.1" lengthAdjust="spacingAndGlyphs" fill="#1c1c1c" >26 °C</text>
<text x="1128.8" y="690.3" font-size="10.6" style="font-family:'Liberation Serif',serif" fill="#3c3c3c">Δ</text><text x="1135.9" y="688.2" font-size="7.2" style="font-family:'Liberation Serif',serif;font-weight:bold" fill="#3c3c3c">t</text>
<text x="1142.5" y="691.5" font-size="12.8" textLength="29.1" lengthAdjust="spacingAndGlyphs" fill="#1c1c1c" >15 m</text>
</svg></div>
<div class="card" style="left:1203.7px;top:489.5px;width:269.5px;height:209.5px">
<svg class="cs" width="269.5" height="209.5" viewBox="1203.7 489.5 269.5 209.5">
<path d="M1250.8 519.0V669.5 M1275.6 519.0V669.5 M1300.4 519.0V669.5 M1325.2 519.0V669.5 M1350.0 519.0V669.5 M1374.9 519.0V669.5 M1399.7 519.0V669.5 M1424.5 519.0V669.5 M1449.3 519.0V669.5 M1243.5 528.1H1466.0 M1243.5 565.8H1466.0 M1243.5 603.4H1466.0 M1243.5 641.2H1466.0" stroke="#66727e" stroke-opacity=".17" stroke-width="1" fill="none"/>
<path d="M1244.0 595.6 L1250.0 595.2 L1256.0 595.6 L1262.0 594.8 L1268.0 595.3 L1275.0 595.0 L1280.0 596.2 L1285.0 595.4 L1290.0 594.6 L1297.0 594.8 L1305.0 595.2 L1312.0 595.6 L1315.0 596.0 L1318.0 597.2 L1321.0 595.3 L1325.0 594.6 L1335.0 594.5 L1345.0 594.3 L1352.0 594.0 L1356.0 593.6 L1360.0 593.9 L1364.0 594.2 L1370.0 595.4 L1375.0 596.0 L1383.0 596.8 L1390.0 597.3 L1396.0 596.5 L1400.0 596.2 L1404.0 595.6 L1409.0 596.6 L1415.0 597.4 L1422.0 597.8 L1430.0 598.0 L1436.0 596.8 L1440.0 596.0 L1444.0 596.8 L1448.0 596.2 L1452.0 597.0 L1455.0 597.6 L1459.0 596.4 L1463.0 596.2 L1466.0 595.8 L1466.0 669.5 L1244.0 669.5Z" fill="#46b561"/>
<clipPath id="cpgpuout"><path d="M1244.0 595.6 L1250.0 595.2 L1256.0 595.6 L1262.0 594.8 L1268.0 595.3 L1275.0 595.0 L1280.0 596.2 L1285.0 595.4 L1290.0 594.6 L1297.0 594.8 L1305.0 595.2 L1312.0 595.6 L1315.0 596.0 L1318.0 597.2 L1321.0 595.3 L1325.0 594.6 L1335.0 594.5 L1345.0 594.3 L1352.0 594.0 L1356.0 593.6 L1360.0 593.9 L1364.0 594.2 L1370.0 595.4 L1375.0 596.0 L1383.0 596.8 L1390.0 597.3 L1396.0 596.5 L1400.0 596.2 L1404.0 595.6 L1409.0 596.6 L1415.0 597.4 L1422.0 597.8 L1430.0 598.0 L1436.0 596.8 L1440.0 596.0 L1444.0 596.8 L1448.0 596.2 L1452.0 597.0 L1455.0 597.6 L1459.0 596.4 L1463.0 596.2 L1466.0 595.8 L1466.0 669.5 L1244.0 669.5Z"/></clipPath>
<path d="M1250.8 521.0V669.5 M1275.6 521.0V669.5 M1300.4 521.0V669.5 M1325.2 521.0V669.5 M1350.0 521.0V669.5 M1374.9 521.0V669.5 M1399.7 521.0V669.5 M1424.5 521.0V669.5 M1449.3 521.0V669.5" stroke="#203040" stroke-opacity=".04" stroke-width="1" fill="none" clip-path="url(#cpgpuout)"/>
<path d="M1244.0 595.6 L1250.0 595.2 L1256.0 595.6 L1262.0 594.8 L1268.0 595.3 L1275.0 595.0 L1280.0 596.2 L1285.0 595.4 L1290.0 594.6 L1297.0 594.8 L1305.0 595.2 L1312.0 595.6 L1315.0 596.0 L1318.0 597.2 L1321.0 595.3 L1325.0 594.6 L1335.0 594.5 L1345.0 594.3 L1352.0 594.0 L1356.0 593.6 L1360.0 593.9 L1364.0 594.2 L1370.0 595.4 L1375.0 596.0 L1383.0 596.8 L1390.0 597.3 L1396.0 596.5 L1400.0 596.2 L1404.0 595.6 L1409.0 596.6 L1415.0 597.4 L1422.0 597.8 L1430.0 598.0 L1436.0 596.8 L1440.0 596.0 L1444.0 596.8 L1448.0 596.2 L1452.0 597.0 L1455.0 597.6 L1459.0 596.4 L1463.0 596.2 L1466.0 595.8" fill="none" stroke="#475249" stroke-width="3.4" stroke-linejoin="round" stroke-linecap="butt"/>
<path d="M1243.5 521.0V670.0 M1243.0 669.5H1466.0 M1250.8 669.5v5.5 M1275.6 669.5v5.5 M1300.4 669.5v5.5 M1325.2 669.5v5.5 M1350.0 669.5v5.5 M1374.9 669.5v5.5 M1399.7 669.5v5.5 M1424.5 669.5v5.5 M1449.3 669.5v5.5 M1263.2 669.5v3.2 M1288.0 669.5v3.2 M1312.8 669.5v3.2 M1337.6 669.5v3.2 M1362.5 669.5v3.2 M1387.3 669.5v3.2 M1412.1 669.5v3.2 M1436.9 669.5v3.2 M1461.7 669.5v3.2 M1238.0 528.1H1243.5 M1238.0 565.8H1243.5 M1238.0 603.4H1243.5 M1238.0 641.2H1243.5" stroke="#0a0a0a" stroke-width="1" fill="none" shape-rendering="crispEdges"/>
<text x="1236.0" y="569.6" font-size="12.9" text-anchor="end" fill="#151515">29,0</text>
<text x="1236.0" y="607.2" font-size="12.9" text-anchor="end" fill="#151515">28,5</text>
<text x="1236.0" y="645.0" font-size="12.9" text-anchor="end" fill="#151515">28,0</text>
<text x="1222.2" y="515.5" font-size="15.6" textLength="52.7" lengthAdjust="spacingAndGlyphs" fill="#1c1c1c" >GPUout</text>
<text x="1406.4" y="515.5" font-size="15.6" textLength="47.1" lengthAdjust="spacingAndGlyphs" fill="#1c1c1c" >28,6 °C</text>
<path d="M1216.0 681.7h7v1.2h-7z M1219.5 682.7L1222.8 689.7H1216.2z" fill="#111"/>
<text x="1227.2" y="691.0" font-size="12.8" textLength="32.1" lengthAdjust="spacingAndGlyphs" fill="#1c1c1c" >29 °C</text>
<path d="M1281.5 681.7h6.6L1284.8 688.0z M1281.3 688.6h7v1.2h-7z" fill="#111"/>
<text x="1292.9" y="691.0" font-size="12.8" textLength="32.1" lengthAdjust="spacingAndGlyphs" fill="#1c1c1c" >29 °C</text>
<circle cx="1349.5" cy="686.0" r="2.6" fill="none" stroke="#222" stroke-width="1"/><path d="M1345.5 689.4L1353.3 682.4" stroke="#222" stroke-width="1" fill="none"/>
<text x="1358.2" y="691.0" font-size="12.8" textLength="32.1" lengthAdjust="spacingAndGlyphs" fill="#1c1c1c" >29 °C</text>
<text x="1414.8" y="689.8" font-size="10.6" style="font-family:'Liberation Serif',serif" fill="#3c3c3c">Δ</text><text x="1421.9" y="687.7" font-size="7.2" style="font-family:'Liberation Serif',serif;font-weight:bold" fill="#3c3c3c">t</text>
<text x="1428.5" y="691.0" font-size="12.8" textLength="29.1" lengthAdjust="spacingAndGlyphs" fill="#1c1c1c" >15 m</text>
</svg></div>
<div class="card" style="left:61.7px;top:711px;width:269.5px;height:209.5px">
<svg class="cs" width="269.5" height="209.5" viewBox="61.7 711 269.5 209.5">
<path d="M107.3 740.5V891.0 M132.3 740.5V891.0 M157.3 740.5V891.0 M182.4 740.5V891.0 M207.4 740.5V891.0 M232.4 740.5V891.0 M257.4 740.5V891.0 M282.5 740.5V891.0 M307.5 740.5V891.0 M101.5 749.0H324.0 M101.5 781.7H324.0 M101.5 816.0H324.0 M101.5 850.0H324.0 M101.5 884.3H324.0" stroke="#66727e" stroke-opacity=".17" stroke-width="1" fill="none"/>
<defs><linearGradient id="gcpu" gradientUnits="userSpaceOnUse" x1="0" y1="749" x2="0" y2="892"><stop offset="0" stop-color="#a48da1"/><stop offset="0.5" stop-color="#958fa8"/><stop offset="1" stop-color="#8791b0"/></linearGradient></defs>
<path d="M102.0 749.0 L105.0 749.0 L109.0 816.7 L112.3 749.0 L175.0 749.0 L178.3 816.0 L182.3 816.0 L186.0 884.3 L324.0 884.3 L324.0 891.0 L102.0 891.0Z" fill="url(#gcpu)"/>
<clipPath id="cpcpu"><path d="M102.0 749.0 L105.0 749.0 L109.0 816.7 L112.3 749.0 L175.0 749.0 L178.3 816.0 L182.3 816.0 L186.0 884.3 L324.0 884.3 L324.0 891.0 L102.0 891.0Z"/></clipPath>
<path d="M107.3 742.5V891.0 M132.3 742.5V891.0 M157.3 742.5V891.0 M182.4 742.5V891.0 M207.4 742.5V891.0 M232.4 742.5V891.0 M257.4 742.5V891.0 M282.5 742.5V891.0 M307.5 742.5V891.0" stroke="#203040" stroke-opacity=".04" stroke-width="1" fill="none" clip-path="url(#cpcpu)"/>
<path d="M102.0 749.0 L105.0 749.0 L109.0 816.7 L112.3 749.0 L175.0 749.0 L178.3 816.0 L182.3 816.0 L186.0 884.3 L324.0 884.3" fill="none" stroke="#45474a" stroke-width="3.3" stroke-linejoin="round" stroke-linecap="butt"/>
<path d="M101.5 742.5V891.5 M101.0 891.0H324.0 M107.3 891.0v5.5 M132.3 891.0v5.5 M157.3 891.0v5.5 M182.4 891.0v5.5 M207.4 891.0v5.5 M232.4 891.0v5.5 M257.4 891.0v5.5 M282.5 891.0v5.5 M307.5 891.0v5.5 M119.8 891.0v3.2 M144.8 891.0v3.2 M169.9 891.0v3.2 M194.9 891.0v3.2 M219.9 891.0v3.2 M244.9 891.0v3.2 M270.0 891.0v3.2 M295.0 891.0v3.2 M320.0 891.0v3.2 M96.0 749.0H101.5 M96.0 781.7H101.5 M96.0 816.0H101.5 M96.0 850.0H101.5 M96.0 884.3H101.5" stroke="#0a0a0a" stroke-width="1" fill="none" shape-rendering="crispEdges"/>
<text x="94.0" y="785.5" font-size="12.9" text-anchor="end" fill="#151515">56,5</text>
<text x="94.0" y="819.8" font-size="12.9" text-anchor="end" fill="#151515">56,0</text>
<text x="94.0" y="853.8" font-size="12.9" text-anchor="end" fill="#151515">55,5</text>
<text x="80.1" y="737.0" font-size="15.6" textLength="29.0" lengthAdjust="spacingAndGlyphs" fill="#1c1c1c" >CPU</text>
<text x="264.1" y="737.0" font-size="15.6" textLength="47.4" lengthAdjust="spacingAndGlyphs" fill="#1c1c1c" >55,0 °C</text>
<path d="M74.0 903.2h7v1.2h-7z M77.5 904.2L80.8 911.2H74.2z" fill="#111"/>
<text x="85.2" y="912.5" font-size="12.8" textLength="32.1" lengthAdjust="spacingAndGlyphs" fill="#1c1c1c" >57 °C</text>
<path d="M139.5 903.2h6.6L142.8 909.5z M139.3 910.1h7v1.2h-7z" fill="#111"/>
<text x="150.9" y="912.5" font-size="12.8" textLength="32.1" lengthAdjust="spacingAndGlyphs" fill="#1c1c1c" >55 °C</text>
<circle cx="207.5" cy="907.5" r="2.6" fill="none" stroke="#222" stroke-width="1"/><path d="M203.5 910.9L211.3 903.9" stroke="#222" stroke-width="1" fill="none"/>
<text x="216.2" y="912.5" font-size="12.8" textLength="32.1" lengthAdjust="spacingAndGlyphs" fill="#1c1c1c" >56 °C</text>
<text x="272.8" y="911.3" font-size="10.6" style="font-family:'Liberation Serif',serif" fill="#3c3c3c">Δ</text><text x="279.9" y="909.2" font-size="7.2" style="font-family:'Liberation Serif',serif;font-weight:bold" fill="#3c3c3c">t</text>
<text x="286.5" y="912.5" font-size="12.8" textLength="29.1" lengthAdjust="spacingAndGlyphs" fill="#1c1c1c" >15 m</text>
</svg></div>
<div class="card" style="left:347.7px;top:711px;width:269.50000000000006px;height:209.5px">
<svg class="cs" width="269.50000000000006" height="209.5" viewBox="347.7 711 269.50000000000006 209.5">
<path d="M395.7 740.5V891.0 M420.3 740.5V891.0 M444.9 740.5V891.0 M469.6 740.5V891.0 M494.2 740.5V891.0 M518.8 740.5V891.0 M543.5 740.5V891.0 M568.1 740.5V891.0 M592.7 740.5V891.0 M387.5 749.0H610.0 M387.5 781.7H610.0 M387.5 816.0H610.0 M387.5 850.0H610.0 M387.5 884.3H610.0" stroke="#66727e" stroke-opacity=".17" stroke-width="1" fill="none"/>
<defs><linearGradient id="ggpu" gradientUnits="userSpaceOnUse" x1="0" y1="749" x2="0" y2="892"><stop offset="0" stop-color="#5db69b"/><stop offset="1" stop-color="#59ad9c"/></linearGradient></defs>
<path d="M387.3 749.0 L390.7 749.0 L394.3 816.0 L401.7 816.0 L406.0 749.0 L418.3 749.0 L424.0 816.0 L428.3 816.0 L434.0 749.0 L438.3 816.0 L440.0 816.0 L444.0 749.0 L446.7 749.0 L450.7 816.0 L459.3 816.0 L463.3 749.0 L468.3 749.0 L471.7 816.0 L481.0 816.0 L485.0 749.0 L491.7 749.0 L495.7 816.0 L521.0 816.0 L525.0 749.0 L529.0 749.0 L534.3 816.0 L537.7 749.0 L541.7 816.0 L580.0 816.0 L584.0 749.0 L588.3 816.0 L600.0 816.0 L601.7 749.0 L603.3 816.0 L606.7 816.0 L608.3 749.0 L609.3 816.0 L609.3 891.0 L387.3 891.0Z" fill="url(#ggpu)"/>
<clipPath id="cpgpu"><path d="M387.3 749.0 L390.7 749.0 L394.3 816.0 L401.7 816.0 L406.0 749.0 L418.3 749.0 L424.0 816.0 L428.3 816.0 L434.0 749.0 L438.3 816.0 L440.0 816.0 L444.0 749.0 L446.7 749.0 L450.7 816.0 L459.3 816.0 L463.3 749.0 L468.3 749.0 L471.7 816.0 L481.0 816.0 L485.0 749.0 L491.7 749.0 L495.7 816.0 L521.0 816.0 L525.0 749.0 L529.0 749.0 L534.3 816.0 L537.7 749.0 L541.7 816.0 L580.0 816.0 L584.0 749.0 L588.3 816.0 L600.0 816.0 L601.7 749.0 L603.3 816.0 L606.7 816.0 L608.3 749.0 L609.3 816.0 L609.3 891.0 L387.3 891.0Z"/></clipPath>
<path d="M395.7 742.5V891.0 M420.3 742.5V891.0 M444.9 742.5V891.0 M469.6 742.5V891.0 M494.2 742.5V891.0 M518.8 742.5V891.0 M543.5 742.5V891.0 M568.1 742.5V891.0 M592.7 742.5V891.0" stroke="#203040" stroke-opacity=".04" stroke-width="1" fill="none" clip-path="url(#cpgpu)"/>
<path d="M387.3 749.0 L390.7 749.0 L394.3 816.0 L401.7 816.0 L406.0 749.0 L418.3 749.0 L424.0 816.0 L428.3 816.0 L434.0 749.0 L438.3 816.0 L440.0 816.0 L444.0 749.0 L446.7 749.0 L450.7 816.0 L459.3 816.0 L463.3 749.0 L468.3 749.0 L471.7 816.0 L481.0 816.0 L485.0 749.0 L491.7 749.0 L495.7 816.0 L521.0 816.0 L525.0 749.0 L529.0 749.0 L534.3 816.0 L537.7 749.0 L541.7 816.0 L580.0 816.0 L584.0 749.0 L588.3 816.0 L600.0 816.0 L601.7 749.0 L603.3 816.0 L606.7 816.0 L608.3 749.0 L609.3 816.0" fill="none" stroke="#444a4c" stroke-width="3.3" stroke-linejoin="round" stroke-linecap="butt"/>
<path d="M387.5 742.5V891.5 M387.0 891.0H610.0 M395.7 891.0v5.5 M420.3 891.0v5.5 M444.9 891.0v5.5 M469.6 891.0v5.5 M494.2 891.0v5.5 M518.8 891.0v5.5 M543.5 891.0v5.5 M568.1 891.0v5.5 M592.7 891.0v5.5 M408.0 891.0v3.2 M432.6 891.0v3.2 M457.3 891.0v3.2 M481.9 891.0v3.2 M506.5 891.0v3.2 M531.1 891.0v3.2 M555.8 891.0v3.2 M580.4 891.0v3.2 M605.0 891.0v3.2 M382.0 749.0H387.5 M382.0 781.7H387.5 M382.0 816.0H387.5 M382.0 850.0H387.5 M382.0 884.3H387.5" stroke="#0a0a0a" stroke-width="1" fill="none" shape-rendering="crispEdges"/>
<text x="380.0" y="785.5" font-size="12.9" text-anchor="end" fill="#151515">42,5</text>
<text x="380.0" y="819.8" font-size="12.9" text-anchor="end" fill="#151515">42,0</text>
<text x="380.0" y="853.8" font-size="12.9" text-anchor="end" fill="#151515">41,5</text>
<text x="365.8" y="737.0" font-size="15.6" textLength="30.0" lengthAdjust="spacingAndGlyphs" fill="#1c1c1c" >GPU</text>
<text x="549.8" y="737.0" font-size="15.6" textLength="47.7" lengthAdjust="spacingAndGlyphs" fill="#1c1c1c" >42,0 °C</text>
<path d="M360.0 903.2h7v1.2h-7z M363.5 904.2L366.8 911.2H360.2z" fill="#111"/>
<text x="371.2" y="912.5" font-size="12.8" textLength="32.1" lengthAdjust="spacingAndGlyphs" fill="#1c1c1c" >43 °C</text>
<path d="M425.5 903.2h6.6L428.8 909.5z M425.3 910.1h7v1.2h-7z" fill="#111"/>
<text x="436.9" y="912.5" font-size="12.8" textLength="32.1" lengthAdjust="spacingAndGlyphs" fill="#1c1c1c" >41 °C</text>
<circle cx="493.5" cy="907.5" r="2.6" fill="none" stroke="#222" stroke-width="1"/><path d="M489.5 910.9L497.3 903.9" stroke="#222" stroke-width="1" fill="none"/>
<text x="502.2" y="912.5" font-size="12.8" textLength="32.1" lengthAdjust="spacingAndGlyphs" fill="#1c1c1c" >42 °C</text>
<text x="558.8" y="911.3" font-size="10.6" style="font-family:'Liberation Serif',serif" fill="#3c3c3c">Δ</text><text x="565.9" y="909.2" font-size="7.2" style="font-family:'Liberation Serif',serif;font-weight:bold" fill="#3c3c3c">t</text>
<text x="572.5" y="912.5" font-size="12.8" textLength="29.1" lengthAdjust="spacingAndGlyphs" fill="#1c1c1c" >15 m</text>
</svg></div>
<div class="card" style="left:631.7px;top:711px;width:269.5px;height:209.5px">
<svg class="cs" width="269.5" height="209.5" viewBox="631.7 711 269.5 209.5">
<path d="M677.4 740.5V891.0 M702.3 740.5V891.0 M727.2 740.5V891.0 M752.1 740.5V891.0 M777.0 740.5V891.0 M801.9 740.5V891.0 M826.8 740.5V891.0 M851.7 740.5V891.0 M876.6 740.5V891.0 M671.5 779.0H894.0 M671.5 816.0H894.0 M671.5 854.0H894.0" stroke="#66727e" stroke-opacity=".17" stroke-width="1" fill="none"/>
<path d="M672.0 816.0 L894.0 816.0 L894.0 891.0 L672.0 891.0Z" fill="#69a9c9"/>
<clipPath id="cpss6"><path d="M672.0 816.0 L894.0 816.0 L894.0 891.0 L672.0 891.0Z"/></clipPath>
<path d="M677.4 742.5V891.0 M702.3 742.5V891.0 M727.2 742.5V891.0 M752.1 742.5V891.0 M777.0 742.5V891.0 M801.9 742.5V891.0 M826.8 742.5V891.0 M851.7 742.5V891.0 M876.6 742.5V891.0" stroke="#203040" stroke-opacity=".04" stroke-width="1" fill="none" clip-path="url(#cpss6)"/>
<path d="M672.0 816.0 L894.0 816.0" fill="none" stroke="#3f4a53" stroke-width="3" stroke-linejoin="round" stroke-linecap="butt"/>
<path d="M671.5 742.5V891.5 M671.0 891.0H894.0 M677.4 891.0v5.5 M702.3 891.0v5.5 M727.2 891.0v5.5 M752.1 891.0v5.5 M777.0 891.0v5.5 M801.9 891.0v5.5 M826.8 891.0v5.5 M851.7 891.0v5.5 M876.6 891.0v5.5 M689.9 891.0v3.2 M714.8 891.0v3.2 M739.6 891.0v3.2 M764.5 891.0v3.2 M789.5 891.0v3.2 M814.4 891.0v3.2 M839.2 891.0v3.2 M864.1 891.0v3.2 M889.0 891.0v3.2 M666.0 779.0H671.5 M666.0 816.0H671.5 M666.0 854.0H671.5 M666.0 891.3H671.5" stroke="#0a0a0a" stroke-width="1" fill="none" shape-rendering="crispEdges"/>
<text x="664.0" y="782.8" font-size="12.9" text-anchor="end" fill="#151515">50,5</text>
<text x="664.0" y="819.8" font-size="12.9" text-anchor="end" fill="#151515">50,0</text>
<text x="664.0" y="857.8" font-size="12.9" text-anchor="end" fill="#151515">49,5</text>
<text x="650.1" y="737.0" font-size="15.6" textLength="118.4" lengthAdjust="spacingAndGlyphs" fill="#1c1c1c" >Software sensor 6</text>
<text x="834.1" y="737.0" font-size="15.6" textLength="47.4" lengthAdjust="spacingAndGlyphs" fill="#1c1c1c" >50,0 °C</text>
<path d="M644.0 903.2h7v1.2h-7z M647.5 904.2L650.8 911.2H644.2z" fill="#111"/>
<text x="655.2" y="912.5" font-size="12.8" textLength="32.1" lengthAdjust="spacingAndGlyphs" fill="#1c1c1c" >50 °C</text>
<path d="M709.5 903.2h6.6L712.8 909.5z M709.3 910.1h7v1.2h-7z" fill="#111"/>
<text x="720.9" y="912.5" font-size="12.8" textLength="32.1" lengthAdjust="spacingAndGlyphs" fill="#1c1c1c" >50 °C</text>
<circle cx="777.5" cy="907.5" r="2.6" fill="none" stroke="#222" stroke-width="1"/><path d="M773.5 910.9L781.3 903.9" stroke="#222" stroke-width="1" fill="none"/>
<text x="786.2" y="912.5" font-size="12.8" textLength="32.1" lengthAdjust="spacingAndGlyphs" fill="#1c1c1c" >50 °C</text>
<text x="842.8" y="911.3" font-size="10.6" style="font-family:'Liberation Serif',serif" fill="#3c3c3c">Δ</text><text x="849.9" y="909.2" font-size="7.2" style="font-family:'Liberation Serif',serif;font-weight:bold" fill="#3c3c3c">t</text>
<text x="856.5" y="912.5" font-size="12.8" textLength="29.1" lengthAdjust="spacingAndGlyphs" fill="#1c1c1c" >15 m</text>
</svg></div>
<div class="card" style="left:917.7px;top:711px;width:269.5px;height:209.5px">
<svg class="cs" width="269.5" height="209.5" viewBox="917.7 711 269.5 209.5">
<path d="M965.0 740.5V891.0 M989.9 740.5V891.0 M1014.8 740.5V891.0 M1039.7 740.5V891.0 M1064.6 740.5V891.0 M1089.5 740.5V891.0 M1114.4 740.5V891.0 M1139.3 740.5V891.0 M1164.2 740.5V891.0 M957.5 779.0H1180.0 M957.5 816.0H1180.0 M957.5 854.0H1180.0" stroke="#66727e" stroke-opacity=".17" stroke-width="1" fill="none"/>
<path d="M958.0 816.0 L1180.0 816.0 L1180.0 891.0 L958.0 891.0Z" fill="#69a9c9"/>
<clipPath id="cpss7"><path d="M958.0 816.0 L1180.0 816.0 L1180.0 891.0 L958.0 891.0Z"/></clipPath>
<path d="M965.0 742.5V891.0 M989.9 742.5V891.0 M1014.8 742.5V891.0 M1039.7 742.5V891.0 M1064.6 742.5V891.0 M1089.5 742.5V891.0 M1114.4 742.5V891.0 M1139.3 742.5V891.0 M1164.2 742.5V891.0" stroke="#203040" stroke-opacity=".04" stroke-width="1" fill="none" clip-path="url(#cpss7)"/>
<path d="M958.0 816.0 L1180.0 816.0" fill="none" stroke="#3f4a53" stroke-width="3" stroke-linejoin="round" stroke-linecap="butt"/>
<path d="M957.5 742.5V891.5 M957.0 891.0H1180.0 M965.0 891.0v5.5 M989.9 891.0v5.5 M1014.8 891.0v5.5 M1039.7 891.0v5.5 M1064.6 891.0v5.5 M1089.5 891.0v5.5 M1114.4 891.0v5.5 M1139.3 891.0v5.5 M1164.2 891.0v5.5 M977.5 891.0v3.2 M1002.4 891.0v3.2 M1027.2 891.0v3.2 M1052.2 891.0v3.2 M1077.0 891.0v3.2 M1102.0 891.0v3.2 M1126.9 891.0v3.2 M1151.8 891.0v3.2 M1176.7 891.0v3.2 M952.0 779.0H957.5 M952.0 816.0H957.5 M952.0 854.0H957.5 M952.0 891.3H957.5" stroke="#0a0a0a" stroke-width="1" fill="none" shape-rendering="crispEdges"/>
<text x="950.0" y="782.8" font-size="12.9" text-anchor="end" fill="#151515">50,5</text>
<text x="950.0" y="819.8" font-size="12.9" text-anchor="end" fill="#151515">50,0</text>
<text x="950.0" y="857.8" font-size="12.9" text-anchor="end" fill="#151515">49,5</text>
<text x="936.4" y="737.0" font-size="15.6" textLength="117.7" lengthAdjust="spacingAndGlyphs" fill="#1c1c1c" >Software sensor 7</text>
<text x="1119.8" y="737.0" font-size="15.6" textLength="47.7" lengthAdjust="spacingAndGlyphs" fill="#1c1c1c" >50,0 °C</text>
<path d="M930.0 903.2h7v1.2h-7z M933.5 904.2L936.8 911.2H930.2z" fill="#111"/>
<text x="941.2" y="912.5" font-size="12.8" textLength="32.1" lengthAdjust="spacingAndGlyphs" fill="#1c1c1c" >50 °C</text>
<path d="M995.5 903.2h6.6L998.8 909.5z M995.3 910.1h7v1.2h-7z" fill="#111"/>
<text x="1006.9" y="912.5" font-size="12.8" textLength="32.1" lengthAdjust="spacingAndGlyphs" fill="#1c1c1c" >50 °C</text>
<circle cx="1063.5" cy="907.5" r="2.6" fill="none" stroke="#222" stroke-width="1"/><path d="M1059.5 910.9L1067.3 903.9" stroke="#222" stroke-width="1" fill="none"/>
<text x="1072.2" y="912.5" font-size="12.8" textLength="32.1" lengthAdjust="spacingAndGlyphs" fill="#1c1c1c" >50 °C</text>
<text x="1128.8" y="911.3" font-size="10.6" style="font-family:'Liberation Serif',serif" fill="#3c3c3c">Δ</text><text x="1135.9" y="909.2" font-size="7.2" style="font-family:'Liberation Serif',serif;font-weight:bold" fill="#3c3c3c">t</text>
<text x="1142.5" y="912.5" font-size="12.8" textLength="29.1" lengthAdjust="spacingAndGlyphs" fill="#1c1c1c" >15 m</text>
</svg></div>
<div class="card" style="left:1203.7px;top:711px;width:269.5px;height:209.5px">
<svg class="cs" width="269.5" height="209.5" viewBox="1203.7 711 269.5 209.5">
<path d="M1250.8 740.5V891.0 M1275.7 740.5V891.0 M1300.6 740.5V891.0 M1325.5 740.5V891.0 M1350.4 740.5V891.0 M1375.3 740.5V891.0 M1400.2 740.5V891.0 M1425.1 740.5V891.0 M1450.0 740.5V891.0 M1243.5 779.0H1466.0 M1243.5 816.0H1466.0 M1243.5 854.0H1466.0" stroke="#66727e" stroke-opacity=".17" stroke-width="1" fill="none"/>
<path d="M1244.0 816.0 L1466.0 816.0 L1466.0 891.0 L1244.0 891.0Z" fill="#69a9c9"/>
<clipPath id="cpss8"><path d="M1244.0 816.0 L1466.0 816.0 L1466.0 891.0 L1244.0 891.0Z"/></clipPath>
<path d="M1250.8 742.5V891.0 M1275.7 742.5V891.0 M1300.6 742.5V891.0 M1325.5 742.5V891.0 M1350.4 742.5V891.0 M1375.3 742.5V891.0 M1400.2 742.5V891.0 M1425.1 742.5V891.0 M1450.0 742.5V891.0" stroke="#203040" stroke-opacity=".04" stroke-width="1" fill="none" clip-path="url(#cpss8)"/>
<path d="M1244.0 816.0 L1466.0 816.0" fill="none" stroke="#3f4a53" stroke-width="3" stroke-linejoin="round" stroke-linecap="butt"/>
<path d="M1243.5 742.5V891.5 M1243.0 891.0H1466.0 M1250.8 891.0v5.5 M1275.7 891.0v5.5 M1300.6 891.0v5.5 M1325.5 891.0v5.5 M1350.4 891.0v5.5 M1375.3 891.0v5.5 M1400.2 891.0v5.5 M1425.1 891.0v5.5 M1450.0 891.0v5.5 M1263.2 891.0v3.2 M1288.2 891.0v3.2 M1313.0 891.0v3.2 M1338.0 891.0v3.2 M1362.9 891.0v3.2 M1387.8 891.0v3.2 M1412.7 891.0v3.2 M1437.5 891.0v3.2 M1462.5 891.0v3.2 M1238.0 779.0H1243.5 M1238.0 816.0H1243.5 M1238.0 854.0H1243.5 M1238.0 891.3H1243.5" stroke="#0a0a0a" stroke-width="1" fill="none" shape-rendering="crispEdges"/>
<text x="1236.0" y="782.8" font-size="12.9" text-anchor="end" fill="#151515">50,5</text>
<text x="1236.0" y="819.8" font-size="12.9" text-anchor="end" fill="#151515">50,0</text>
<text x="1236.0" y="857.8" font-size="12.9" text-anchor="end" fill="#151515">49,5</text>
<text x="1222.6" y="737.0" font-size="15.6" textLength="118.4" lengthAdjust="spacingAndGlyphs" fill="#1c1c1c" >Software sensor 8</text>
<text x="1405.6" y="737.0" font-size="15.6" textLength="47.5" lengthAdjust="spacingAndGlyphs" fill="#1c1c1c" >50,0 °C</text>
<path d="M1216.0 903.2h7v1.2h-7z M1219.5 904.2L1222.8 911.2H1216.2z" fill="#111"/>
<text x="1227.2" y="912.5" font-size="12.8" textLength="32.1" lengthAdjust="spacingAndGlyphs" fill="#1c1c1c" >50 °C</text>
<path d="M1281.5 903.2h6.6L1284.8 909.5z M1281.3 910.1h7v1.2h-7z" fill="#111"/>
<text x="1292.9" y="912.5" font-size="12.8" textLength="32.1" lengthAdjust="spacingAndGlyphs" fill="#1c1c1c" >50 °C</text>
<circle cx="1349.5" cy="907.5" r="2.6" fill="none" stroke="#222" stroke-width="1"/><path d="M1345.5 910.9L1353.3 903.9" stroke="#222" stroke-width="1" fill="none"/>
<text x="1358.2" y="912.5" font-size="12.8" textLength="32.1" lengthAdjust="spacingAndGlyphs" fill="#1c1c1c" >50 °C</text>
<text x="1414.8" y="911.3" font-size="10.6" style="font-family:'Liberation Serif',serif" fill="#3c3c3c">Δ</text><text x="1421.9" y="909.2" font-size="7.2" style="font-family:'Liberation Serif',serif;font-weight:bold" fill="#3c3c3c">t</text>
<text x="1428.5" y="912.5" font-size="12.8" textLength="29.1" lengthAdjust="spacingAndGlyphs" fill="#1c1c1c" >15 m</text>
</svg></div>
<div class="card" style="left:1490px;top:711px;width:269.5px;height:209.5px">
<svg class="cs" width="269.5" height="209.5" viewBox="1490 711 269.5 209.5">
<path d="M1528.5 779.2H1752.4 M1528.5 816.5H1752.4 M1528.5 854.2H1752.4 M1528.5 742.5H1752.4 M1528.5 891.0H1752.4" stroke="#66727e" stroke-opacity=".17" stroke-width="1" fill="none"/>
<path d="M1528.5 742.5V891.5 M1523.0 779.2H1528.5 M1523.0 816.5H1528.5 M1523.0 854.2H1528.5 M1523.0 891.0H1528.5" stroke="#0a0a0a" stroke-width="1" fill="none" shape-rendering="crispEdges"/>
<text x="1521.0" y="783.0" font-size="12.9" text-anchor="end" fill="#151515">0,5</text>
<text x="1521.0" y="820.3" font-size="12.9" text-anchor="end" fill="#151515">0,0</text>
<text x="1521.0" y="858.0" font-size="12.9" text-anchor="end" fill="#151515">-0,5</text>
<text x="1505.9" y="733.7" font-size="15.6" textLength="43.4" lengthAdjust="spacingAndGlyphs" fill="#1c1c1c" >DRAM</text>
<text x="1713.5" y="733.7" font-size="15.6" textLength="27.0" lengthAdjust="spacingAndGlyphs" fill="#1c1c1c" >- - -</text>
<path d="M1514.8 903.2h7v1.2h-7z M1518.3 904.2L1521.6 911.2H1515.0z" fill="#111"/>
<text x="1526.2" y="912.5" font-size="12.8" textLength="8.0" lengthAdjust="spacingAndGlyphs" fill="#1c1c1c" >0</text>
<path d="M1580.6 903.2h6.6L1583.9 909.5z M1580.4 910.1h7v1.2h-7z" fill="#111"/>
<text x="1591.5" y="912.5" font-size="12.8" textLength="8.0" lengthAdjust="spacingAndGlyphs" fill="#1c1c1c" >0</text>
<circle cx="1649.0" cy="907.5" r="2.6" fill="none" stroke="#222" stroke-width="1"/><path d="M1645.0 910.9L1652.8 903.9" stroke="#222" stroke-width="1" fill="none"/>
<text x="1657.4" y="912.5" font-size="12.8" textLength="8.0" lengthAdjust="spacingAndGlyphs" fill="#1c1c1c" >0</text>
<text x="1712.3" y="911.3" font-size="10.6" style="font-family:'Liberation Serif',serif" fill="#3c3c3c">Δ</text><text x="1719.4" y="909.2" font-size="7.2" style="font-family:'Liberation Serif',serif;font-weight:bold" fill="#3c3c3c">t</text>
<text x="1726.1" y="912.5" font-size="12.8" textLength="8.0" lengthAdjust="spacingAndGlyphs" fill="#1c1c1c" >0</text>
</svg></div>
<div class="card" style="left:64px;top:936px;width:269.5px;height:209.5px">
<svg class="cs" width="269.5" height="209.5" viewBox="64 936 269.5 209.5">
<path d="M88.2 965.5V1116.0 M116.8 965.5V1116.0 M145.4 965.5V1116.0 M174.0 965.5V1116.0 M202.6 965.5V1116.0 M231.2 965.5V1116.0 M259.8 965.5V1116.0 M288.4 965.5V1116.0 M317.0 965.5V1116.0 M80.5 992.7H326.0 M80.5 1030.0H326.0" stroke="#66727e" stroke-opacity=".17" stroke-width="1" fill="none"/>
<path d="M80.5 967.5V1116.5 M80.0 1116.0H326.0 M88.2 1116.0v5.5 M116.8 1116.0v5.5 M145.4 1116.0v5.5 M174.0 1116.0v5.5 M202.6 1116.0v5.5 M231.2 1116.0v5.5 M259.8 1116.0v5.5 M288.4 1116.0v5.5 M317.0 1116.0v5.5 M102.5 1116.0v3.2 M131.1 1116.0v3.2 M159.7 1116.0v3.2 M188.3 1116.0v3.2 M216.9 1116.0v3.2 M245.5 1116.0v3.2 M274.1 1116.0v3.2 M302.7 1116.0v3.2 M75.0 992.7H80.5 M75.0 1030.0H80.5" stroke="#0a0a0a" stroke-width="1" fill="none" shape-rendering="crispEdges"/>
<text x="100.8" y="964.0" font-size="15.6" textLength="94.0" lengthAdjust="spacingAndGlyphs" fill="#1c1c1c" >Core #1 Clock</text>
<text x="255.8" y="962.3" font-size="15.6" textLength="68.3" lengthAdjust="spacingAndGlyphs" fill="#1c1c1c" >4592 MHz</text>
</svg></div>
<div class="card" style="left:350.3px;top:936px;width:269.49999999999994px;height:209.5px">
<svg class="cs" width="269.49999999999994" height="209.5" viewBox="350.3 936 269.49999999999994 209.5">
<path d="M372.3 965.5V1116.0 M400.9 965.5V1116.0 M429.5 965.5V1116.0 M458.1 965.5V1116.0 M486.7 965.5V1116.0 M515.3 965.5V1116.0 M543.9 965.5V1116.0 M572.5 965.5V1116.0 M601.1 965.5V1116.0 M364.6 992.7H612.3 M364.6 1030.0H612.3" stroke="#66727e" stroke-opacity=".17" stroke-width="1" fill="none"/>
<path d="M364.6 967.5V1116.5 M364.1 1116.0H612.3 M372.3 1116.0v5.5 M400.9 1116.0v5.5 M429.5 1116.0v5.5 M458.1 1116.0v5.5 M486.7 1116.0v5.5 M515.3 1116.0v5.5 M543.9 1116.0v5.5 M572.5 1116.0v5.5 M601.1 1116.0v5.5 M386.6 1116.0v3.2 M415.2 1116.0v3.2 M443.8 1116.0v3.2 M472.4 1116.0v3.2 M501.0 1116.0v3.2 M529.6 1116.0v3.2 M558.2 1116.0v3.2 M586.8 1116.0v3.2 M359.1 992.7H364.6 M359.1 1030.0H364.6" stroke="#0a0a0a" stroke-width="1" fill="none" shape-rendering="crispEdges"/>
<text x="381.2" y="964.0" font-size="15.6" textLength="93.9" lengthAdjust="spacingAndGlyphs" fill="#1c1c1c" >Core #2 Clock</text>
<text x="541.8" y="962.3" font-size="15.6" textLength="69.0" lengthAdjust="spacingAndGlyphs" fill="#1c1c1c" >4592 MHz</text>
</svg></div>
<div class="card" style="left:634.3px;top:936px;width:269.5px;height:209.5px">
<svg class="cs" width="269.5" height="209.5" viewBox="634.3 936 269.5 209.5">
<path d="M657.0 965.5V1116.0 M685.6 965.5V1116.0 M714.2 965.5V1116.0 M742.8 965.5V1116.0 M771.4 965.5V1116.0 M800.0 965.5V1116.0 M828.6 965.5V1116.0 M857.2 965.5V1116.0 M885.8 965.5V1116.0 M649.3 992.7H896.3 M649.3 1030.0H896.3" stroke="#66727e" stroke-opacity=".17" stroke-width="1" fill="none"/>
<path d="M649.3 967.5V1116.5 M648.8 1116.0H896.3 M657.0 1116.0v5.5 M685.6 1116.0v5.5 M714.2 1116.0v5.5 M742.8 1116.0v5.5 M771.4 1116.0v5.5 M800.0 1116.0v5.5 M828.6 1116.0v5.5 M857.2 1116.0v5.5 M885.8 1116.0v5.5 M671.3 1116.0v3.2 M699.9 1116.0v3.2 M728.5 1116.0v3.2 M757.1 1116.0v3.2 M785.7 1116.0v3.2 M814.3 1116.0v3.2 M842.9 1116.0v3.2 M871.5 1116.0v3.2 M643.8 992.7H649.3 M643.8 1030.0H649.3" stroke="#0a0a0a" stroke-width="1" fill="none" shape-rendering="crispEdges"/>
<text x="670.8" y="964.0" font-size="15.6" textLength="94.0" lengthAdjust="spacingAndGlyphs" fill="#1c1c1c" >Core #3 Clock</text>
<text x="825.8" y="962.3" font-size="15.6" textLength="69.0" lengthAdjust="spacingAndGlyphs" fill="#1c1c1c" >4592 MHz</text>
</svg></div>
<div class="card" style="left:920px;top:936px;width:269.5px;height:209.5px">
<svg class="cs" width="269.5" height="209.5" viewBox="920 936 269.5 209.5">
<path d="M941.0 965.5V1116.0 M969.6 965.5V1116.0 M998.2 965.5V1116.0 M1026.8 965.5V1116.0 M1055.4 965.5V1116.0 M1084.0 965.5V1116.0 M1112.6 965.5V1116.0 M1141.2 965.5V1116.0 M1169.8 965.5V1116.0 M933.3 992.7H1182.0 M933.3 1030.0H1182.0" stroke="#66727e" stroke-opacity=".17" stroke-width="1" fill="none"/>
<path d="M933.3 967.5V1116.5 M932.8 1116.0H1182.0 M941.0 1116.0v5.5 M969.6 1116.0v5.5 M998.2 1116.0v5.5 M1026.8 1116.0v5.5 M1055.4 1116.0v5.5 M1084.0 1116.0v5.5 M1112.6 1116.0v5.5 M1141.2 1116.0v5.5 M1169.8 1116.0v5.5 M955.3 1116.0v3.2 M983.9 1116.0v3.2 M1012.5 1116.0v3.2 M1041.1 1116.0v3.2 M1069.7 1116.0v3.2 M1098.3 1116.0v3.2 M1126.9 1116.0v3.2 M1155.5 1116.0v3.2 M927.8 992.7H933.3 M927.8 1030.0H933.3" stroke="#0a0a0a" stroke-width="1" fill="none" shape-rendering="crispEdges"/>
<text x="950.8" y="964.0" font-size="15.6" textLength="94.0" lengthAdjust="spacingAndGlyphs" fill="#1c1c1c" >Core #4 Clock</text>
<text x="1111.8" y="962.3" font-size="15.6" textLength="69.0" lengthAdjust="spacingAndGlyphs" fill="#1c1c1c" >4592 MHz</text>
</svg></div>
<div class="card" style="left:1205.5px;top:936px;width:269.5px;height:209.5px">
<svg class="cs" width="269.5" height="209.5" viewBox="1205.5 936 269.5 209.5">
<path d="M1245.4 965.5V1116.0 M1271.4 965.5V1116.0 M1297.4 965.5V1116.0 M1323.4 965.5V1116.0 M1349.4 965.5V1116.0 M1375.4 965.5V1116.0 M1401.4 965.5V1116.0 M1427.4 965.5V1116.0 M1453.4 965.5V1116.0 M1238.5 999.1H1468.0 M1238.5 1036.7H1468.0" stroke="#66727e" stroke-opacity=".17" stroke-width="1" fill="none"/>
<path d="M1238.5 967.5V1116.5 M1238.0 1116.0H1468.0 M1245.4 1116.0v5.5 M1271.4 1116.0v5.5 M1297.4 1116.0v5.5 M1323.4 1116.0v5.5 M1349.4 1116.0v5.5 M1375.4 1116.0v5.5 M1401.4 1116.0v5.5 M1427.4 1116.0v5.5 M1453.4 1116.0v5.5 M1258.4 1116.0v3.2 M1284.4 1116.0v3.2 M1310.4 1116.0v3.2 M1336.4 1116.0v3.2 M1362.4 1116.0v3.2 M1388.4 1116.0v3.2 M1414.4 1116.0v3.2 M1440.4 1116.0v3.2 M1466.4 1116.0v3.2 M1233.0 999.1H1238.5 M1233.0 1036.7H1238.5" stroke="#0a0a0a" stroke-width="1" fill="none" shape-rendering="crispEdges"/>
<text x="1231.0" y="1002.9" font-size="12.9" text-anchor="end" fill="#151515">4,0</text>
<text x="1231.0" y="1040.5" font-size="12.9" text-anchor="end" fill="#151515">3,5</text>
<text x="1231.4" y="964.0" font-size="15.6" textLength="70.4" lengthAdjust="spacingAndGlyphs" fill="#1c1c1c" >Used RAM</text>
<text x="1404.7" y="962.5" font-size="15.6" textLength="50.1" lengthAdjust="spacingAndGlyphs" fill="#1c1c1c" >3,42 GB</text>
</svg></div>
<div class="card" style="left:1492px;top:935px;width:269.5px;height:209.5px">
<svg class="cs" width="269.5" height="209.5" viewBox="1492 935 269.5 209.5">
<path d="M1557.0 964.5V1060.0 M1581.0 964.5V1060.0 M1605.0 964.5V1060.0 M1629.0 964.5V1060.0 M1653.0 964.5V1060.0 M1677.0 964.5V1060.0 M1701.0 964.5V1060.0 M1725.0 964.5V1060.0 M1749.0 964.5V1060.0 M1547.5 984.0H1755.0 M1547.5 1011.7H1755.0 M1547.5 1039.4H1755.0" stroke="#66727e" stroke-opacity=".17" stroke-width="1" fill="none"/>
<path d="M1548.0 973.5 L1608.0 973.5 L1609.2 1050.0 L1611.8 1050.0 L1613.0 973.5 L1618.0 973.5 L1619.2 1050.0 L1620.8 1050.0 L1622.0 973.5 L1634.0 973.5 L1635.2 1050.0 L1641.8 1050.0 L1643.0 973.5 L1652.0 973.5 L1653.2 1050.0 L1657.8 1050.0 L1659.0 973.5 L1665.0 973.5 L1666.2 1050.0 L1668.8 1050.0 L1670.0 973.5 L1687.0 973.5 L1688.2 1050.0 L1689.8 1050.0 L1691.0 973.5 L1693.0 973.5 L1694.2 1050.0 L1699.8 1050.0 L1701.0 973.5 L1706.0 973.5 L1707.2 1050.0 L1710.8 1050.0 L1712.0 973.5 L1718.0 973.5 L1719.2 1050.0 L1720.8 1050.0 L1722.0 973.5 L1726.0 973.5 L1727.2 1050.0 L1728.8 1050.0 L1730.0 973.5 L1739.0 973.5 L1740.2 1050.0 L1742.8 1050.0 L1744.0 973.5 L1746.0 973.5 L1747.2 1050.0 L1746.8 1050.0 L1748.0 973.5 L1750.0 973.5 L1751.2 1050.0 L1750.8 1050.0 L1752.0 973.5 L1755.0 973.5 L1756.2 1050.0 L1756.2 1060.0 L1548.0 1060.0Z" fill="#d9525e"/>
<clipPath id="cpvolt"><path d="M1548.0 973.5 L1608.0 973.5 L1609.2 1050.0 L1611.8 1050.0 L1613.0 973.5 L1618.0 973.5 L1619.2 1050.0 L1620.8 1050.0 L1622.0 973.5 L1634.0 973.5 L1635.2 1050.0 L1641.8 1050.0 L1643.0 973.5 L1652.0 973.5 L1653.2 1050.0 L1657.8 1050.0 L1659.0 973.5 L1665.0 973.5 L1666.2 1050.0 L1668.8 1050.0 L1670.0 973.5 L1687.0 973.5 L1688.2 1050.0 L1689.8 1050.0 L1691.0 973.5 L1693.0 973.5 L1694.2 1050.0 L1699.8 1050.0 L1701.0 973.5 L1706.0 973.5 L1707.2 1050.0 L1710.8 1050.0 L1712.0 973.5 L1718.0 973.5 L1719.2 1050.0 L1720.8 1050.0 L1722.0 973.5 L1726.0 973.5 L1727.2 1050.0 L1728.8 1050.0 L1730.0 973.5 L1739.0 973.5 L1740.2 1050.0 L1742.8 1050.0 L1744.0 973.5 L1746.0 973.5 L1747.2 1050.0 L1746.8 1050.0 L1748.0 973.5 L1750.0 973.5 L1751.2 1050.0 L1750.8 1050.0 L1752.0 973.5 L1755.0 973.5 L1756.2 1050.0 L1756.2 1060.0 L1548.0 1060.0Z"/></clipPath>
<path d="M1557.0 966.5V1060.0 M1581.0 966.5V1060.0 M1605.0 966.5V1060.0 M1629.0 966.5V1060.0 M1653.0 966.5V1060.0 M1677.0 966.5V1060.0 M1701.0 966.5V1060.0 M1725.0 966.5V1060.0 M1749.0 966.5V1060.0" stroke="#203040" stroke-opacity=".04" stroke-width="1" fill="none" clip-path="url(#cpvolt)"/>
<path d="M1548.0 973.5 L1608.0 973.5 L1609.2 1050.0 L1611.8 1050.0 L1613.0 973.5 L1618.0 973.5 L1619.2 1050.0 L1620.8 1050.0 L1622.0 973.5 L1634.0 973.5 L1635.2 1050.0 L1641.8 1050.0 L1643.0 973.5 L1652.0 973.5 L1653.2 1050.0 L1657.8 1050.0 L1659.0 973.5 L1665.0 973.5 L1666.2 1050.0 L1668.8 1050.0 L1670.0 973.5 L1687.0 973.5 L1688.2 1050.0 L1689.8 1050.0 L1691.0 973.5 L1693.0 973.5 L1694.2 1050.0 L1699.8 1050.0 L1701.0 973.5 L1706.0 973.5 L1707.2 1050.0 L1710.8 1050.0 L1712.0 973.5 L1718.0 973.5 L1719.2 1050.0 L1720.8 1050.0 L1722.0 973.5 L1726.0 973.5 L1727.2 1050.0 L1728.8 1050.0 L1730.0 973.5 L1739.0 973.5 L1740.2 1050.0 L1742.8 1050.0 L1744.0 973.5 L1746.0 973.5 L1747.2 1050.0 L1746.8 1050.0 L1748.0 973.5 L1750.0 973.5 L1751.2 1050.0 L1750.8 1050.0 L1752.0 973.5 L1755.0 973.5 L1756.2 1050.0" fill="none" stroke="#4a4446" stroke-width="3.2" stroke-linejoin="round" stroke-linecap="butt"/>
<path d="M1547.5 966.5V1060.5 M1547.0 1060.0H1755.0 M1557.0 1060.0v5.5 M1581.0 1060.0v5.5 M1605.0 1060.0v5.5 M1629.0 1060.0v5.5 M1653.0 1060.0v5.5 M1677.0 1060.0v5.5 M1701.0 1060.0v5.5 M1725.0 1060.0v5.5 M1749.0 1060.0v5.5 M1569.0 1060.0v3.2 M1593.0 1060.0v3.2 M1617.0 1060.0v3.2 M1641.0 1060.0v3.2 M1665.0 1060.0v3.2 M1689.0 1060.0v3.2 M1713.0 1060.0v3.2 M1737.0 1060.0v3.2 M1542.0 984.0H1547.5 M1542.0 1011.7H1547.5 M1542.0 1039.4H1547.5" stroke="#0a0a0a" stroke-width="1" fill="none" shape-rendering="crispEdges"/>
<text x="1540.0" y="987.8" font-size="12.9" text-anchor="end" fill="#151515">1,3550</text>
<text x="1540.0" y="1015.5" font-size="12.9" text-anchor="end" fill="#151515">1,3525</text>
<text x="1540.0" y="1043.2" font-size="12.9" text-anchor="end" fill="#151515">1,3500</text>
<text x="1516.3" y="963.6" font-size="15.6" textLength="83.2" lengthAdjust="spacingAndGlyphs" fill="#1c1c1c" >CPU Voltage</text>
<text x="1693.9" y="960.6" font-size="15.6" textLength="48.2" lengthAdjust="spacingAndGlyphs" fill="#1c1c1c" >1,356 V</text>
</svg></div>
<svg id="ov" width="1920" height="1040" viewBox="0 0 1920 1040">
<text x="8" y="23.6" font-size="27.5" style="font-family:'DejaVu Sans','Liberation Sans',sans-serif;font-weight:200" textLength="111.5" lengthAdjust="spacingAndGlyphs" fill="#fff" stroke="#fff" stroke-width=".55">aquasuite</text>
<text x="134" y="20.6" font-size="11.6" textLength="35.5" lengthAdjust="spacingAndGlyphs" fill="#fff">2018-6</text>
<circle cx="1808" cy="16" r="8.3" fill="none" stroke="#fff" stroke-width="1.7"/>
<text x="1808" y="20.6" font-size="13" style="font-family:'Liberation Serif',serif;font-weight:bold" text-anchor="middle" fill="#fff">i</text>
<rect x="1834" y="19.8" width="10.5" height="3.4" fill="#fff"/>
<path d="M1868.6 14.2V9.9h9.4v8.6h-3.4" fill="none" stroke="#fff" stroke-width="1.7"/><path d="M1868.4 11.6h9.6" stroke="#fff" stroke-width="2.4"/>
<rect x="1864.3" y="15.2" width="10.2" height="7" fill="none" stroke="#fff" stroke-width="1.7"/><path d="M1864 16.3h11" stroke="#fff" stroke-width="2.6"/>
<path d="M1897 9.5L1909.5 21.8M1909.5 9.5L1897 21.8" stroke="#fff" stroke-width="2.7" fill="none"/>
<path d="M11.5 60.0h1.8 M11.5 63.9h1.8 M11.5 67.8h1.8 M11.5 71.7h1.8 M11.5 75.6h1.8 M11.5 79.5h1.8 M11.5 83.4h1.8 M11.5 87.3h1.8 M11.5 91.2h1.8 M11.5 95.1h1.8 M11.5 99.0h1.8 M11.5 102.9h1.8 M11.5 106.8h1.8 M11.5 110.7h1.8 M11.5 114.6h1.8 M11.5 118.5h1.8 M11.5 122.4h1.8 M11.5 126.3h1.8 M11.5 130.2h1.8 M15.4 67.0h1.8 M15.4 70.9h1.8 M15.4 74.8h1.8 M15.4 78.7h1.8 M15.4 82.6h1.8 M15.4 86.5h1.8 M15.4 90.4h1.8 M15.4 94.3h1.8 M15.4 98.2h1.8 M15.4 102.1h1.8 M15.4 106.0h1.8 M15.4 109.9h1.8 M15.4 113.8h1.8 M15.4 117.7h1.8 M15.4 121.6h1.8 M19.3 74.0h1.8 M19.3 77.9h1.8 M19.3 81.8h1.8 M19.3 85.7h1.8 M19.3 89.6h1.8 M19.3 93.5h1.8 M19.3 97.4h1.8 M19.3 101.3h1.8 M19.3 105.2h1.8 M19.3 109.1h1.8 M19.3 113.0h1.8 M19.3 116.9h1.8 M23.2 81.0h1.8 M23.2 84.9h1.8 M23.2 88.8h1.8 M23.2 92.7h1.8 M23.2 96.6h1.8 M23.2 100.5h1.8 M23.2 104.4h1.8 M23.2 108.3h1.8 M27.1 88.0h1.8 M27.1 91.9h1.8 M27.1 95.8h1.8 M27.1 99.7h1.8 M27.1 103.6h1.8 M31.0 95.0h1.8" stroke="#c8d4dc" stroke-opacity=".17" stroke-width="1.8"/>
<text transform="translate(28.2 992.5) rotate(-90)" font-size="28" style="font-family:'DejaVu Sans','Liberation Sans',sans-serif;font-weight:200" textLength="202" lengthAdjust="spacingAndGlyphs" fill="#d2e3eb" stroke="#d2e3eb" stroke-width=".55">aquacomputer</text>
<path d="M28.5 1002.6A14 14 0 1 0 33.2 1008" fill="none" stroke="#cfe1ea" stroke-width="2.2"/><path d="M26 1001.2l7 .2" stroke="#cfe1ea" stroke-width="2"/>
<circle cx="21" cy="1015.3" r="11.2" fill="#e3eaee"/>
<path d="M20.5 1002.5l-1.8 3.6 4.6 5.2-2.6 5.2.9 9.8" fill="none" stroke="#6f8895" stroke-width="1.6"/>
<text x="1502" y="351.2" font-size="44" textLength="231" lengthAdjust="spacingAndGlyphs" fill="#fff">WaKü-Infos</text>
<text x="1484" y="552.3" font-size="44" textLength="274" lengthAdjust="spacingAndGlyphs" fill="#fff">Rechner-Infos</text>
<path d="M1511.40 426.17V391.00A5.90 5.90 0 0 1 1523.20 391.00V426.17A13.4 13.4 0 1 1 1511.40 426.17Z" fill="none" stroke="#fff" stroke-width="3.4"/><circle cx="1517.3" cy="438.2" r="6.7" fill="#fff"/><path d="M1517.3 407.9V438.2" stroke="#fff" stroke-width="5" stroke-linecap="round"/><text x="1530.1" y="402.0" font-size="23" style="font-family:'DejaVu Sans','Liberation Sans',sans-serif;font-weight:200" textLength="25.5" lengthAdjust="spacingAndGlyphs" fill="#fff" stroke="#fff" stroke-width=".45">°C</text>
<path d="M1511.40 615.87V580.70A5.90 5.90 0 0 1 1523.20 580.70V615.87A13.4 13.4 0 1 1 1511.40 615.87Z" fill="none" stroke="#fff" stroke-width="3.4"/><circle cx="1517.3" cy="627.9" r="6.7" fill="#fff"/><path d="M1517.3 597.6V627.9" stroke="#fff" stroke-width="5" stroke-linecap="round"/><text x="1530.1" y="591.7" font-size="23" style="font-family:'DejaVu Sans','Liberation Sans',sans-serif;font-weight:200" textLength="25.5" lengthAdjust="spacingAndGlyphs" fill="#fff" stroke="#fff" stroke-width=".45">°C</text>
<path d="M1627.30 406.05L1624.44 386.40Q1632.40 382.30 1639.56 391.34Q1645.15 400.50 1632.20 410.95A15.6 15.6 0 0 0 1627.30 406.05Z M1632.86 420.12L1648.45 407.81Q1655.98 412.66 1651.73 423.38Q1646.59 432.80 1631.07 426.81A15.6 15.6 0 0 0 1632.86 420.12Z M1623.46 431.97L1641.91 439.31Q1641.48 448.26 1630.07 449.94Q1619.34 450.20 1616.77 433.76A15.6 15.6 0 0 0 1623.46 431.97Z M1608.50 429.75L1611.36 449.40Q1603.40 453.50 1596.24 444.46Q1590.65 435.30 1603.60 424.85A15.6 15.6 0 0 0 1608.50 429.75Z M1602.94 415.68L1587.35 427.99Q1579.82 423.14 1584.07 412.42Q1589.21 403.00 1604.73 408.99A15.6 15.6 0 0 0 1602.94 415.68Z M1612.34 403.83L1593.89 396.49Q1594.32 387.54 1605.73 385.86Q1616.46 385.60 1619.03 402.04A15.6 15.6 0 0 0 1612.34 403.83Z" fill="#fdfdfb"/><circle cx="1617.9" cy="417.9" r="12.7" fill="#fdfdfb"/>
<path d="M1687.2 425.8H1674.4V440.1H1741.5V425.8H1728.2A21.9 21.9 0 1 0 1687.2 425.8" fill="none" stroke="#fff" stroke-width="3.3" stroke-linejoin="miter"/><path d="M1707.7 402.2V434.2 M1694.4 410.8L1721.0 425.6 M1694.4 425.6L1721.0 410.8" stroke="#fff" stroke-width="2.6" fill="none"/>
<path d="M1904.6 1017L1909 1005.5L1913.4 1017zM1904.6 1021.5H1913.4L1909 1033z" fill="#a5a2a0"/>
<path d="M0 0.5H1920M0.5 0V1040M1919.5 0V1040M0 1039.5H1920" stroke="#1a1a1c" stroke-width="1" fill="none"/>
</svg>
</div>
</body>
</html>
